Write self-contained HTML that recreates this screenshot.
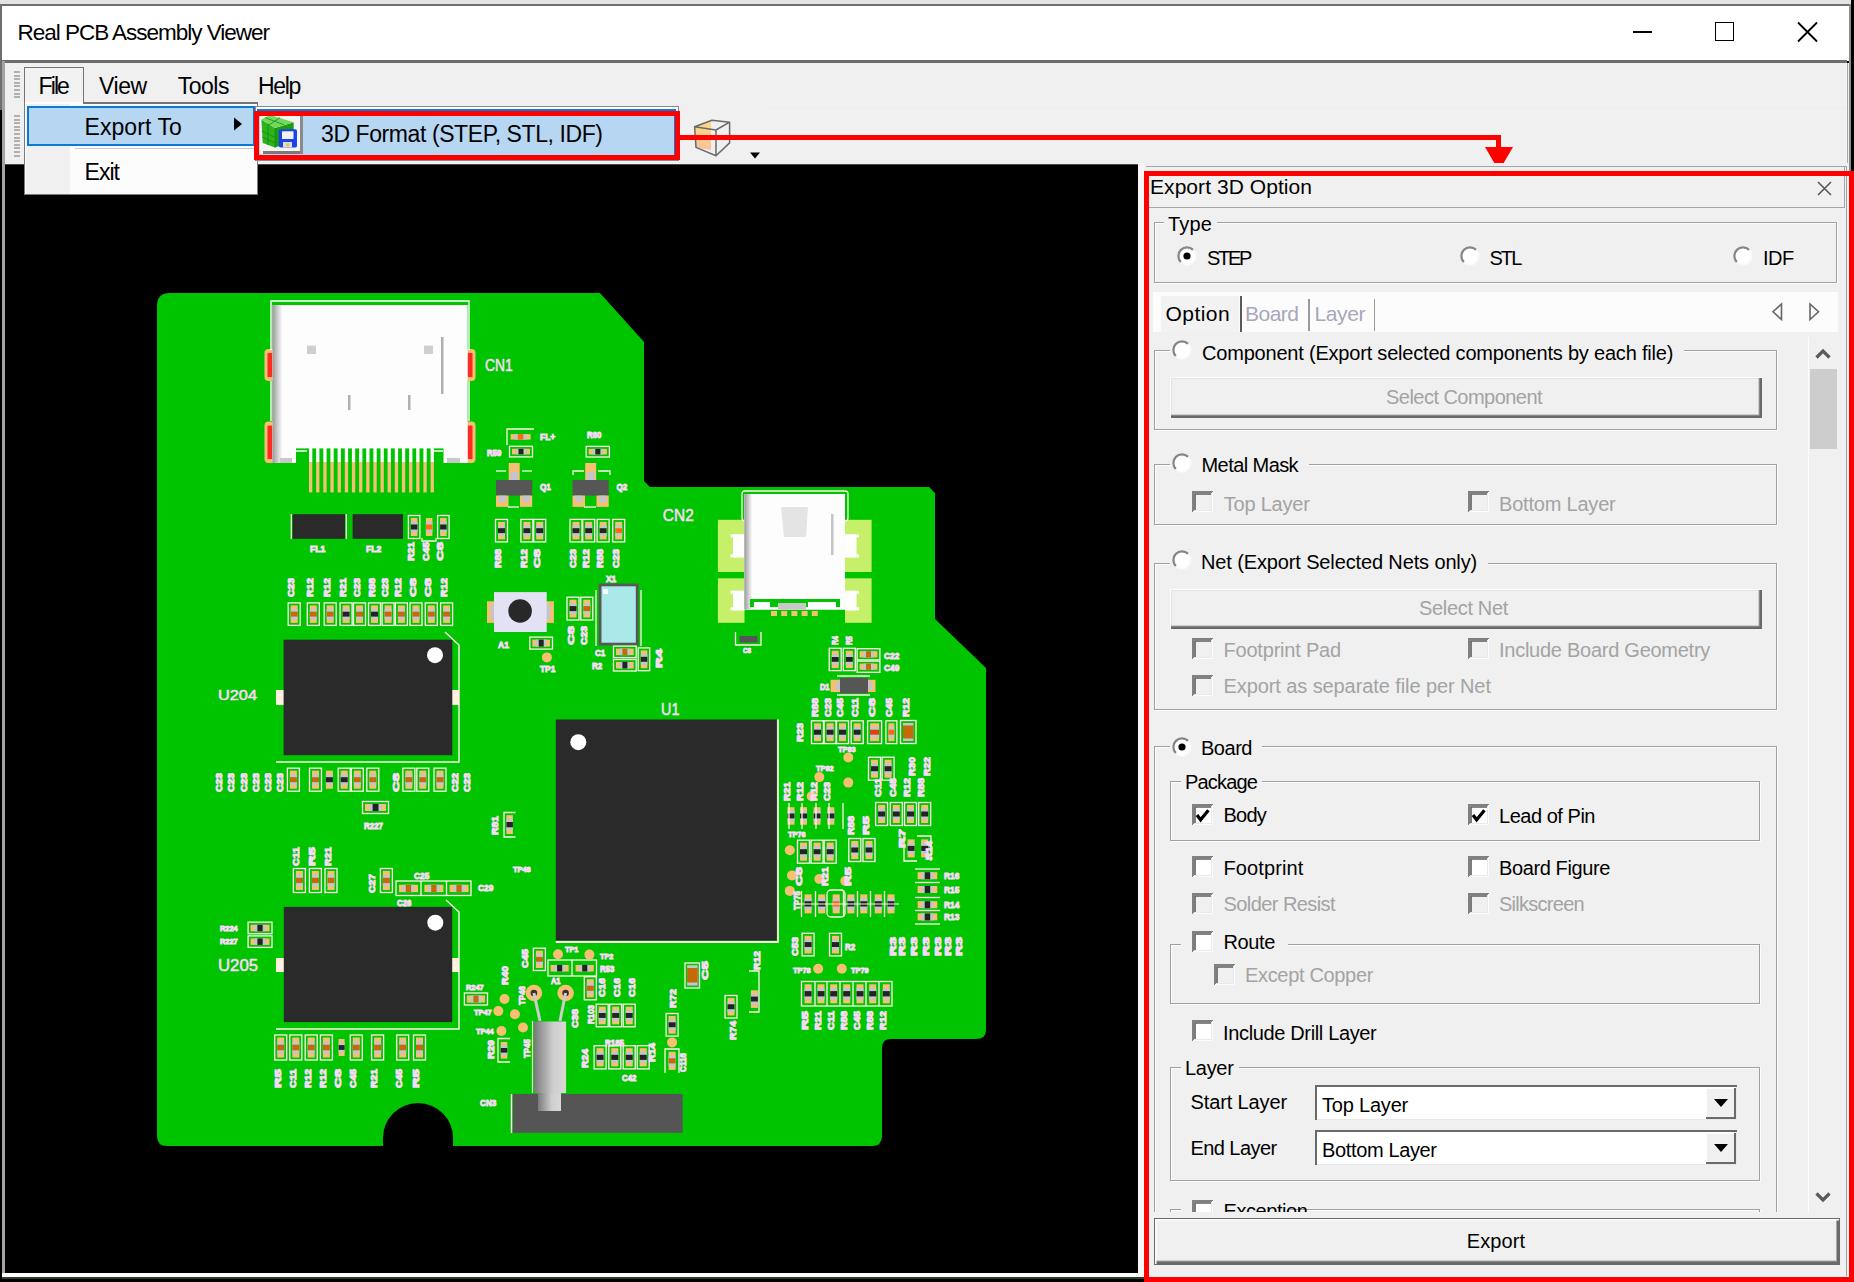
<!DOCTYPE html>
<html><head><meta charset="utf-8"><title>Real PCB Assembly Viewer</title>
<style>
html,body{margin:0;padding:0;}
body{width:1854px;height:1282px;position:relative;overflow:hidden;background:#000;font-family:"Liberation Sans",sans-serif;}
.b{position:absolute;}
.t{position:absolute;white-space:nowrap;line-height:normal;font-family:"Liberation Sans",sans-serif;}
svg.b{overflow:visible;}
</style></head><body>
<div class="b" style="left:0px;top:0px;width:1854px;height:4px;background:#e3e3e3"></div>
<div class="b" style="left:0px;top:4px;width:1851px;height:2px;background:#6f6f6f"></div>
<div class="b" style="left:0px;top:4px;width:2px;height:106px;background:#6f6f6f"></div>
<div class="b" style="left:2px;top:6px;width:1847px;height:55px;background:#fff"></div>
<div class="b" style="left:1849px;top:4px;width:2px;height:1278px;background:#8c8c8c"></div>
<div class="b" style="left:1851px;top:0px;width:3px;height:1282px;background:#000"></div>
<div class="t" style="left:17.5px;top:19.6px;font-size:22.5px;color:#000;letter-spacing:-1.02px;">Real PCB Assembly Viewer</div>
<div class="b" style="left:1633px;top:31px;width:19px;height:2px;background:#000"></div>
<div class="b" style="left:1715px;top:22px;width:19px;height:19px;border:1.8px solid #000;box-sizing:border-box"></div>
<svg class="b" style="left:1795px;top:20px" width="25" height="24"><path d="M3 2.5 L22 21.5 M22 2.5 L3 21.5" stroke="#000" stroke-width="1.8"/></svg>
<div class="b" style="left:2px;top:60px;width:1845px;height:3px;background:#6d6d6d"></div>
<div class="b" style="left:2px;top:61px;width:3px;height:1213px;background:#a3a3a3"></div>
<div class="b" style="left:5px;top:63px;width:1842px;height:101px;background:#f0f0f0"></div>
<div class="b" style="left:766px;top:106.5px;width:1081px;height:1.0px;background:#ececec"></div>
<div class="b" style="left:1846px;top:63px;width:3px;height:1214px;background:#f2f2f2"></div>
<div class="b" style="left:1847px;top:63px;width:1.2999999999999545px;height:1214px;background:#a8a8a8"></div>
<div class="b" style="left:14px;top:71px;width:6px;height:1.5px;background:#b0b0b0"></div>
<div class="b" style="left:14px;top:75px;width:6px;height:1.5px;background:#b0b0b0"></div>
<div class="b" style="left:14px;top:78px;width:6px;height:1.5px;background:#b0b0b0"></div>
<div class="b" style="left:14px;top:82px;width:6px;height:1.5px;background:#b0b0b0"></div>
<div class="b" style="left:14px;top:85px;width:6px;height:1.5px;background:#b0b0b0"></div>
<div class="b" style="left:14px;top:89px;width:6px;height:1.5px;background:#b0b0b0"></div>
<div class="b" style="left:14px;top:93px;width:6px;height:1.5px;background:#b0b0b0"></div>
<div class="b" style="left:14px;top:96px;width:6px;height:1.5px;background:#b0b0b0"></div>
<div class="b" style="left:14px;top:115px;width:6px;height:1.5px;background:#b0b0b0"></div>
<div class="b" style="left:14px;top:119px;width:6px;height:1.5px;background:#b0b0b0"></div>
<div class="b" style="left:14px;top:122px;width:6px;height:1.5px;background:#b0b0b0"></div>
<div class="b" style="left:14px;top:126px;width:6px;height:1.5px;background:#b0b0b0"></div>
<div class="b" style="left:14px;top:129px;width:6px;height:1.5px;background:#b0b0b0"></div>
<div class="b" style="left:14px;top:133px;width:6px;height:1.5px;background:#b0b0b0"></div>
<div class="b" style="left:14px;top:137px;width:6px;height:1.5px;background:#b0b0b0"></div>
<div class="b" style="left:14px;top:140px;width:6px;height:1.5px;background:#b0b0b0"></div>
<div class="b" style="left:14px;top:144px;width:6px;height:1.5px;background:#b0b0b0"></div>
<div class="b" style="left:14px;top:147px;width:6px;height:1.5px;background:#b0b0b0"></div>
<div class="b" style="left:14px;top:151px;width:6px;height:1.5px;background:#b0b0b0"></div>
<div class="b" style="left:14px;top:155px;width:6px;height:1.5px;background:#b0b0b0"></div>
<div class="b" style="left:5px;top:164px;width:1133px;height:1110px;background:#000"></div>
<div class="b" style="left:5px;top:163.5px;width:1133px;height:1.5px;background:#4a4a4a"></div>
<div class="b" style="left:2px;top:1273px;width:1142px;height:4px;background:#fff"></div>
<div class="b" style="left:2px;top:1277px;width:1142px;height:2px;background:#2f3d2a"></div>
<div class="b" style="left:1138px;top:163px;width:6px;height:1114px;background:#f6f6f6"></div>
<div class="b" style="left:24px;top:67px;width:60px;height:37px;border:1.5px solid #747474;border-bottom:none;background:#f2f2f2;box-sizing:border-box"></div>
<div class="t" style="left:38.5px;top:73.2px;font-size:23px;color:#000;letter-spacing:-1.89px;">File</div>
<div class="t" style="left:99.0px;top:73.2px;font-size:23px;color:#000;letter-spacing:-0.43px;">View</div>
<div class="t" style="left:177.7px;top:73.2px;font-size:23px;color:#000;letter-spacing:-0.50px;">Tools</div>
<div class="t" style="left:258.0px;top:73.2px;font-size:23px;color:#000;letter-spacing:-1.33px;">Help</div>
<svg class="b" style="left:690px;top:116px" width="80" height="46">
      <defs><linearGradient id="pe" x1="0" x2="0" y1="0" y2="1"><stop offset="0" stop-color="#fcd983"/><stop offset="1" stop-color="#f8c29a"/></linearGradient></defs>
      <polygon points="4.6,10.7 21,5 21,34 6,31.4" fill="url(#pe)"/>
      <path d="M4.6 10.7 L22 4.2 L39.6 6.2 L39.6 26.9 L26 39.8 L6 31.4 Z M4.6 10.7 L26 14 L39.6 6.2 M26 14 L26 39.8" fill="none" stroke="#6a6a6a" stroke-width="1.5" stroke-linejoin="round"/>
      <polygon points="60,36.6 70,36.6 65,42.4" fill="#000"/>
    </svg>
<div class="b" style="left:24px;top:102px;width:234px;height:93px;border:1.5px solid #7a7a7a;border-top:none;background:#fcfcfc;box-sizing:border-box"></div>
<div class="b" style="left:82.5px;top:102px;width:175.5px;height:2px;background:#747474"></div>
<div class="b" style="left:25.5px;top:104px;width:44.5px;height:89.5px;background:#f0f0f0"></div>
<div class="b" style="left:27px;top:106px;width:228px;height:40px;border:2px solid #0a7ad8;background:#b6d6f2;box-sizing:border-box"></div>
<div class="b" style="left:75px;top:147.5px;width:180px;height:1.5px;background:#c8c8c8"></div>
<div class="t" style="left:84.5px;top:113.6px;font-size:23px;color:#000;letter-spacing:0.08px;">Export To</div>
<svg class="b" style="left:232px;top:116px" width="12" height="16"><polygon points="2,1.5 10,8 2,14.5" fill="#000"/></svg>
<div class="t" style="left:84.5px;top:158.9px;font-size:23px;color:#000;letter-spacing:-0.96px;">Exit</div>
<div class="b" style="left:255px;top:106px;width:424px;height:55px;border:1.5px solid #8a8a8a;background:#fcfcfc;box-sizing:border-box"></div>
<div class="b" style="left:257px;top:109px;width:419px;height:49px;border:2px solid #0a7ad8;background:#b6d6f2;box-sizing:border-box"></div>
<div class="b" style="left:260px;top:115px;width:43px;height:39px;background:#f4f4f4"></div>
<div class="b" style="left:263px;top:151px;width:40px;height:3px;background:#7a7a7a"></div>
<div class="b" style="left:300px;top:115px;width:3px;height:39px;background:#8a8a8a"></div>
<svg class="b" style="left:260px;top:114px" width="44" height="40">
      <polygon points="1.4,5.6 15,14 15,33.4 2.7,28.9" fill="#2db31e"/>
      <polygon points="15,14 33.7,8.2 33.7,27 15,33.4" fill="#1f9a14"/>
      <polygon points="1.4,5.6 9.8,1 33.7,8.2 15,14" fill="#72d85c"/>
      <path d="M8 9.5 L8 31 M1.8 17 L15 23.5 M2.2 23 L15 29 M15 14 L15 33.4 M5 3.6 L24 10.8 M20 3.6 L9 11" stroke="#168a0c" stroke-width="0.8" fill="none"/>
      <rect x="18.8" y="15.3" width="18.2" height="18.1" rx="1.6" fill="#1a44e8"/>
      <rect x="22" y="17.3" width="11.5" height="7.7" fill="#f2f2f2"/>
      <rect x="23" y="28" width="9" height="5.4" fill="#dcdcdc"/>
      <rect x="26.3" y="29.3" width="2.8" height="3" fill="#f0c050"/>
    </svg>
<div class="t" style="left:321.0px;top:120.6px;font-size:23px;color:#000;letter-spacing:-0.41px;">3D Format (STEP, STL, IDF)</div>
<div class="b" style="left:254px;top:110.5px;width:426px;height:49.5px;border:5px solid #ff0000;box-sizing:border-box"></div>
<div class="b" style="left:680px;top:135px;width:821px;height:5px;background:#ff0000"></div>
<div class="b" style="left:1496px;top:135px;width:5px;height:13px;background:#ff0000"></div>
<svg class="b" style="left:1480px;top:145px" width="40" height="30"><polygon points="5,2 33,2 19,26" fill="#ff0000"/></svg>
<svg class="b" style="left:0;top:0" width="1854" height="1282" viewBox="0 0 1854 1282">
<defs><linearGradient id="shL" x1="0" x2="1" y1="0" y2="0"><stop offset="0" stop-color="#9a9a9a"/><stop offset="1" stop-color="#fafafa"/></linearGradient><linearGradient id="cyl" x1="0" x2="1" y1="0" y2="0"><stop offset="0" stop-color="#7a7a7a"/><stop offset="0.6" stop-color="#cfcfcf"/><stop offset="1" stop-color="#d8d8d8"/></linearGradient></defs>
<path d="M170 293 L600 293 L644 342 L644 481 L650 487 L929 487 L935 493 L935 619 L986 668 L986 1030 Q986 1039 976 1039 L891 1039 Q882 1039 882 1048 L882 1136 Q882 1146 872 1146 L453 1146 L453 1138 A35 35 0 0 0 383 1138 L383 1146 L167 1146 Q157 1146 157 1136 L157 306 Q157 293 170 293 Z" fill="#00c400"/>
<rect x="264.5" y="349" width="10" height="32" rx="4" fill="#f7bf72"/>
<rect x="267.5" y="353.0" width="5.0" height="24.0" fill="#ff2a20" />
<rect x="465.5" y="349" width="10" height="32" rx="4" fill="#f7bf72"/>
<rect x="467.5" y="353.0" width="5.0" height="24.0" fill="#ff2a20" />
<rect x="264.5" y="421.6" width="10" height="41.39999999999998" rx="4" fill="#f7bf72"/>
<rect x="267.5" y="425.6" width="5.0" height="33.4" fill="#ff2a20" />
<rect x="465.5" y="421.6" width="10" height="41.39999999999998" rx="4" fill="#f7bf72"/>
<rect x="467.5" y="425.6" width="5.0" height="33.4" fill="#ff2a20" />
<rect x="309.0" y="448.0" width="3.3" height="14.0" fill="#ffffff" />
<rect x="309.0" y="462.0" width="3.3" height="30.4" fill="#f7bf72" />
<rect x="316.1" y="448.0" width="3.3" height="14.0" fill="#ffffff" />
<rect x="316.1" y="462.0" width="3.3" height="30.4" fill="#f7bf72" />
<rect x="323.3" y="448.0" width="3.3" height="14.0" fill="#ffffff" />
<rect x="323.3" y="462.0" width="3.3" height="30.4" fill="#f7bf72" />
<rect x="330.4" y="448.0" width="3.3" height="14.0" fill="#ffffff" />
<rect x="330.4" y="462.0" width="3.3" height="30.4" fill="#f7bf72" />
<rect x="337.6" y="448.0" width="3.3" height="14.0" fill="#ffffff" />
<rect x="337.6" y="462.0" width="3.3" height="30.4" fill="#f7bf72" />
<rect x="344.8" y="448.0" width="3.3" height="14.0" fill="#ffffff" />
<rect x="344.8" y="462.0" width="3.3" height="30.4" fill="#f7bf72" />
<rect x="351.9" y="448.0" width="3.3" height="14.0" fill="#ffffff" />
<rect x="351.9" y="462.0" width="3.3" height="30.4" fill="#f7bf72" />
<rect x="359.1" y="448.0" width="3.3" height="14.0" fill="#ffffff" />
<rect x="359.1" y="462.0" width="3.3" height="30.4" fill="#f7bf72" />
<rect x="366.2" y="448.0" width="3.3" height="14.0" fill="#ffffff" />
<rect x="366.2" y="462.0" width="3.3" height="30.4" fill="#f7bf72" />
<rect x="373.4" y="448.0" width="3.3" height="14.0" fill="#ffffff" />
<rect x="373.4" y="462.0" width="3.3" height="30.4" fill="#f7bf72" />
<rect x="380.5" y="448.0" width="3.3" height="14.0" fill="#ffffff" />
<rect x="380.5" y="462.0" width="3.3" height="30.4" fill="#f7bf72" />
<rect x="387.6" y="448.0" width="3.3" height="14.0" fill="#ffffff" />
<rect x="387.6" y="462.0" width="3.3" height="30.4" fill="#f7bf72" />
<rect x="394.8" y="448.0" width="3.3" height="14.0" fill="#ffffff" />
<rect x="394.8" y="462.0" width="3.3" height="30.4" fill="#f7bf72" />
<rect x="401.9" y="448.0" width="3.3" height="14.0" fill="#ffffff" />
<rect x="401.9" y="462.0" width="3.3" height="30.4" fill="#f7bf72" />
<rect x="409.1" y="448.0" width="3.3" height="14.0" fill="#ffffff" />
<rect x="409.1" y="462.0" width="3.3" height="30.4" fill="#f7bf72" />
<rect x="416.2" y="448.0" width="3.3" height="14.0" fill="#ffffff" />
<rect x="416.2" y="462.0" width="3.3" height="30.4" fill="#f7bf72" />
<rect x="423.4" y="448.0" width="3.3" height="14.0" fill="#ffffff" />
<rect x="423.4" y="462.0" width="3.3" height="30.4" fill="#f7bf72" />
<rect x="430.6" y="448.0" width="3.3" height="14.0" fill="#ffffff" />
<rect x="430.6" y="462.0" width="3.3" height="30.4" fill="#f7bf72" />
<path d="M296.0 451.0 L307.0 451.0" stroke="#ffffff" stroke-width="1.5" fill="none"/>
<path d="M432.0 451.0 L443.0 451.0" stroke="#ffffff" stroke-width="1.5" fill="none"/>
<rect x="272.5" y="305.0" width="195.2" height="143.4" fill="#fdfdfd" />
<rect x="272.5" y="305.0" width="9.5" height="158.0" fill="url(#shL)" />
<rect x="272.5" y="448.0" width="23.5" height="15.0" fill="#fdfdfd" />
<rect x="272.5" y="448.0" width="9.5" height="15.0" fill="url(#shL)" />
<rect x="443.5" y="448.0" width="24.2" height="15.0" fill="#fdfdfd" />
<rect x="280.0" y="458.0" width="12.0" height="5.0" fill="#c8c8c8" />
<rect x="447.0" y="458.0" width="13.0" height="5.0" fill="#c8c8c8" />
<path d="M271.0 350.0 L271.0 301.0 L469.0 301.0 L469.0 350.0" stroke="#ffffff" stroke-width="1.4" fill="none"/>
<path d="M271.0 381.0 L271.0 421.0" stroke="#ffffff" stroke-width="1.4" fill="none"/>
<path d="M469.0 381.0 L469.0 421.0" stroke="#ffffff" stroke-width="1.4" fill="none"/>
<rect x="307.0" y="345.6" width="9.0" height="8.4" fill="#cfcfcf" />
<rect x="424.0" y="345.6" width="9.0" height="8.4" fill="#cfcfcf" />
<rect x="441.0" y="337.0" width="2.5" height="57.0" fill="#b0b0b0" />
<rect x="348.0" y="395.0" width="2.5" height="15.0" fill="#b0b0b0" />
<rect x="408.0" y="395.0" width="2.5" height="15.0" fill="#b0b0b0" />
<text x="485.0" y="370.7" font-size="16.8" fill="#f9daf9" font-family="Liberation Sans" textLength="27.6" lengthAdjust="spacingAndGlyphs" stroke="#f9daf9" stroke-width="0.5">CN1</text>
<rect x="292.6" y="514.2" width="52.4" height="24.6" fill="#2a2a2a" />
<path d="M291.3 514.0 L291.3 539.0" stroke="#fdf3ea" stroke-width="1.2" fill="none"/>
<path d="M346.3 514.0 L346.3 539.0" stroke="#fdf3ea" stroke-width="1.2" fill="none"/>
<rect x="352.6" y="514.2" width="50.3" height="24.6" fill="#2a2a2a" />
<rect x="408.4" y="515.5" width="11.5" height="23.0" fill="none" stroke="#fdf3ea" stroke-width="1.3"/>
<rect x="410.9" y="518.0" width="6.5" height="18.0" fill="#f7bf72" />
<rect x="410.9" y="521.6" width="6.5" height="10.8" fill="#c4c4cc" />
<rect x="410.9" y="524.5" width="6.5" height="5.0" fill="#232323" />
<rect x="425.9" y="518.0" width="6.5" height="18.0" fill="#f7bf72" />
<rect x="425.9" y="521.6" width="6.5" height="10.8" fill="#c4c4cc" />
<rect x="425.9" y="524.5" width="6.5" height="5.0" fill="#ff6a10" />
<rect x="437.6" y="515.5" width="11.5" height="23.0" fill="none" stroke="#fdf3ea" stroke-width="1.3"/>
<rect x="440.1" y="518.0" width="6.5" height="18.0" fill="#f7bf72" />
<rect x="440.1" y="521.6" width="6.5" height="10.8" fill="#c4c4cc" />
<rect x="440.1" y="524.5" width="6.5" height="5.0" fill="#232323" />
<path d="M422.0 538.0 L422.0 541.0 L436.0 541.0 L436.0 538.0" stroke="#fdf3ea" stroke-width="1.3" fill="none"/>
<text x="310.0" y="552.0" font-size="9.0" fill="#f9daf9" font-weight="bold" font-family="Liberation Sans" textLength="15.3" lengthAdjust="spacingAndGlyphs" stroke="#f9daf9" stroke-width="0.9" text-anchor="start">FL1</text>
<text x="366.0" y="552.0" font-size="9.0" fill="#f9daf9" font-weight="bold" font-family="Liberation Sans" textLength="15.3" lengthAdjust="spacingAndGlyphs" stroke="#f9daf9" stroke-width="0.9" text-anchor="start">FL2</text>
<text transform="translate(414.0,561.0) rotate(-90)" font-size="9.6" fill="#f9daf9" font-weight="bold" font-family="Liberation Sans" textLength="19.0" lengthAdjust="spacingAndGlyphs" stroke="#f9daf9" stroke-width="0.9">R21</text>
<text transform="translate(429.0,561.0) rotate(-90)" font-size="9.6" fill="#f9daf9" font-weight="bold" font-family="Liberation Sans" textLength="19.0" lengthAdjust="spacingAndGlyphs" stroke="#f9daf9" stroke-width="0.9">C45</text>
<text transform="translate(443.0,561.0) rotate(-90)" font-size="9.6" fill="#f9daf9" font-weight="bold" font-family="Liberation Sans" textLength="19.0" lengthAdjust="spacingAndGlyphs" stroke="#f9daf9" stroke-width="0.9">C8</text>
<rect x="288.2" y="602.9" width="12.0" height="22.5" fill="none" stroke="#fdf3ea" stroke-width="1.3"/>
<rect x="290.7" y="605.4" width="7.0" height="17.5" fill="#f7bf72" />
<rect x="290.7" y="608.9" width="7.0" height="10.5" fill="#c4c4cc" />
<rect x="290.7" y="611.7" width="7.0" height="4.9" fill="#c46a08" />
<rect x="307.3" y="602.9" width="12.0" height="22.5" fill="none" stroke="#fdf3ea" stroke-width="1.3"/>
<rect x="309.8" y="605.4" width="7.0" height="17.5" fill="#f7bf72" />
<rect x="309.8" y="608.9" width="7.0" height="10.5" fill="#c4c4cc" />
<rect x="309.8" y="611.7" width="7.0" height="4.9" fill="#c46a08" />
<rect x="324.2" y="602.9" width="12.0" height="22.5" fill="none" stroke="#fdf3ea" stroke-width="1.3"/>
<rect x="326.7" y="605.4" width="7.0" height="17.5" fill="#f7bf72" />
<rect x="326.7" y="608.9" width="7.0" height="10.5" fill="#c4c4cc" />
<rect x="326.7" y="611.7" width="7.0" height="4.9" fill="#c46a08" />
<rect x="340.1" y="602.9" width="12.0" height="22.5" fill="none" stroke="#fdf3ea" stroke-width="1.3"/>
<rect x="342.6" y="605.4" width="7.0" height="17.5" fill="#f7bf72" />
<rect x="342.6" y="608.9" width="7.0" height="10.5" fill="#c4c4cc" />
<rect x="342.6" y="611.7" width="7.0" height="4.9" fill="#232323" />
<rect x="353.5" y="602.9" width="12.0" height="22.5" fill="none" stroke="#fdf3ea" stroke-width="1.3"/>
<rect x="356.0" y="605.4" width="7.0" height="17.5" fill="#f7bf72" />
<rect x="356.0" y="608.9" width="7.0" height="10.5" fill="#c4c4cc" />
<rect x="356.0" y="611.7" width="7.0" height="4.9" fill="#c46a08" />
<rect x="368.5" y="602.9" width="12.0" height="22.5" fill="none" stroke="#fdf3ea" stroke-width="1.3"/>
<rect x="371.0" y="605.4" width="7.0" height="17.5" fill="#f7bf72" />
<rect x="371.0" y="608.9" width="7.0" height="10.5" fill="#c4c4cc" />
<rect x="371.0" y="611.7" width="7.0" height="4.9" fill="#232323" />
<rect x="382.1" y="602.9" width="12.0" height="22.5" fill="none" stroke="#fdf3ea" stroke-width="1.3"/>
<rect x="384.6" y="605.4" width="7.0" height="17.5" fill="#f7bf72" />
<rect x="384.6" y="608.9" width="7.0" height="10.5" fill="#c4c4cc" />
<rect x="384.6" y="611.7" width="7.0" height="4.9" fill="#c46a08" />
<rect x="395.4" y="602.9" width="12.0" height="22.5" fill="none" stroke="#fdf3ea" stroke-width="1.3"/>
<rect x="397.9" y="605.4" width="7.0" height="17.5" fill="#f7bf72" />
<rect x="397.9" y="608.9" width="7.0" height="10.5" fill="#c4c4cc" />
<rect x="397.9" y="611.7" width="7.0" height="4.9" fill="#c46a08" />
<rect x="410.0" y="602.9" width="12.0" height="22.5" fill="none" stroke="#fdf3ea" stroke-width="1.3"/>
<rect x="412.5" y="605.4" width="7.0" height="17.5" fill="#f7bf72" />
<rect x="412.5" y="608.9" width="7.0" height="10.5" fill="#c4c4cc" />
<rect x="412.5" y="611.7" width="7.0" height="4.9" fill="#c46a08" />
<rect x="425.3" y="602.9" width="12.0" height="22.5" fill="none" stroke="#fdf3ea" stroke-width="1.3"/>
<rect x="427.8" y="605.4" width="7.0" height="17.5" fill="#f7bf72" />
<rect x="427.8" y="608.9" width="7.0" height="10.5" fill="#c4c4cc" />
<rect x="427.8" y="611.7" width="7.0" height="4.9" fill="#c46a08" />
<rect x="440.6" y="602.9" width="12.0" height="22.5" fill="none" stroke="#fdf3ea" stroke-width="1.3"/>
<rect x="443.1" y="605.4" width="7.0" height="17.5" fill="#f7bf72" />
<rect x="443.1" y="608.9" width="7.0" height="10.5" fill="#c4c4cc" />
<rect x="443.1" y="611.7" width="7.0" height="4.9" fill="#c46a08" />
<text transform="translate(294.2,597.0) rotate(-90)" font-size="9.6" fill="#f9daf9" font-weight="bold" font-family="Liberation Sans" textLength="19.0" lengthAdjust="spacingAndGlyphs" stroke="#f9daf9" stroke-width="0.9">C23</text>
<text transform="translate(313.3,597.0) rotate(-90)" font-size="9.6" fill="#f9daf9" font-weight="bold" font-family="Liberation Sans" textLength="19.0" lengthAdjust="spacingAndGlyphs" stroke="#f9daf9" stroke-width="0.9">R12</text>
<text transform="translate(330.2,597.0) rotate(-90)" font-size="9.6" fill="#f9daf9" font-weight="bold" font-family="Liberation Sans" textLength="19.0" lengthAdjust="spacingAndGlyphs" stroke="#f9daf9" stroke-width="0.9">R12</text>
<text transform="translate(346.1,597.0) rotate(-90)" font-size="9.6" fill="#f9daf9" font-weight="bold" font-family="Liberation Sans" textLength="19.0" lengthAdjust="spacingAndGlyphs" stroke="#f9daf9" stroke-width="0.9">R21</text>
<text transform="translate(359.5,597.0) rotate(-90)" font-size="9.6" fill="#f9daf9" font-weight="bold" font-family="Liberation Sans" textLength="19.0" lengthAdjust="spacingAndGlyphs" stroke="#f9daf9" stroke-width="0.9">C23</text>
<text transform="translate(374.5,597.0) rotate(-90)" font-size="9.6" fill="#f9daf9" font-weight="bold" font-family="Liberation Sans" textLength="19.0" lengthAdjust="spacingAndGlyphs" stroke="#f9daf9" stroke-width="0.9">R88</text>
<text transform="translate(388.1,597.0) rotate(-90)" font-size="9.6" fill="#f9daf9" font-weight="bold" font-family="Liberation Sans" textLength="19.0" lengthAdjust="spacingAndGlyphs" stroke="#f9daf9" stroke-width="0.9">C23</text>
<text transform="translate(401.4,597.0) rotate(-90)" font-size="9.6" fill="#f9daf9" font-weight="bold" font-family="Liberation Sans" textLength="19.0" lengthAdjust="spacingAndGlyphs" stroke="#f9daf9" stroke-width="0.9">R12</text>
<text transform="translate(416.0,597.0) rotate(-90)" font-size="9.6" fill="#f9daf9" font-weight="bold" font-family="Liberation Sans" textLength="19.0" lengthAdjust="spacingAndGlyphs" stroke="#f9daf9" stroke-width="0.9">C8</text>
<text transform="translate(431.3,597.0) rotate(-90)" font-size="9.6" fill="#f9daf9" font-weight="bold" font-family="Liberation Sans" textLength="19.0" lengthAdjust="spacingAndGlyphs" stroke="#f9daf9" stroke-width="0.9">C8</text>
<text transform="translate(446.6,597.0) rotate(-90)" font-size="9.6" fill="#f9daf9" font-weight="bold" font-family="Liberation Sans" textLength="19.0" lengthAdjust="spacingAndGlyphs" stroke="#f9daf9" stroke-width="0.9">R12</text>
<rect x="276.0" y="690.0" width="8.0" height="15.0" fill="#fff0e0" />
<rect x="452.0" y="690.0" width="7.0" height="15.0" fill="#fff0e0" />
<rect x="283.6" y="639.7" width="168.7" height="115.5" fill="#2a2a2a" />
<circle cx="435" cy="655.2" r="8" fill="#fff"/>
<path d="M445.0 632.0 L459.0 645.0 L459.0 762.0 L276.0 762.0" stroke="#fdf3ea" stroke-width="1.4" fill="none"/>
<text x="218.0" y="699.5" font-size="14" fill="#f9daf9" font-family="Liberation Sans" textLength="39" lengthAdjust="spacingAndGlyphs" stroke="#f9daf9" stroke-width="0.5">U204</text>
<rect x="287.4" y="768.2" width="12.0" height="23.0" fill="none" stroke="#fdf3ea" stroke-width="1.3"/>
<rect x="289.9" y="770.7" width="7.0" height="18.0" fill="#f7bf72" />
<rect x="289.9" y="774.3" width="7.0" height="10.8" fill="#c4c4cc" />
<rect x="289.9" y="777.2" width="7.0" height="5.0" fill="#c46a08" />
<rect x="309.5" y="768.2" width="12.0" height="23.0" fill="none" stroke="#fdf3ea" stroke-width="1.3"/>
<rect x="312.0" y="770.7" width="7.0" height="18.0" fill="#f7bf72" />
<rect x="312.0" y="774.3" width="7.0" height="10.8" fill="#c4c4cc" />
<rect x="312.0" y="777.2" width="7.0" height="5.0" fill="#c46a08" />
<rect x="338.2" y="768.2" width="12.0" height="23.0" fill="none" stroke="#fdf3ea" stroke-width="1.3"/>
<rect x="340.7" y="770.7" width="7.0" height="18.0" fill="#f7bf72" />
<rect x="340.7" y="774.3" width="7.0" height="10.8" fill="#c4c4cc" />
<rect x="340.7" y="777.2" width="7.0" height="5.0" fill="#232323" />
<rect x="351.3" y="768.2" width="12.0" height="23.0" fill="none" stroke="#fdf3ea" stroke-width="1.3"/>
<rect x="353.8" y="770.7" width="7.0" height="18.0" fill="#f7bf72" />
<rect x="353.8" y="774.3" width="7.0" height="10.8" fill="#c4c4cc" />
<rect x="353.8" y="777.2" width="7.0" height="5.0" fill="#c46a08" />
<rect x="366.8" y="768.2" width="12.0" height="23.0" fill="none" stroke="#fdf3ea" stroke-width="1.3"/>
<rect x="369.3" y="770.7" width="7.0" height="18.0" fill="#f7bf72" />
<rect x="369.3" y="774.3" width="7.0" height="10.8" fill="#c4c4cc" />
<rect x="369.3" y="777.2" width="7.0" height="5.0" fill="#c46a08" />
<rect x="402.9" y="768.2" width="12.0" height="23.0" fill="none" stroke="#fdf3ea" stroke-width="1.3"/>
<rect x="405.4" y="770.7" width="7.0" height="18.0" fill="#f7bf72" />
<rect x="405.4" y="774.3" width="7.0" height="10.8" fill="#c4c4cc" />
<rect x="405.4" y="777.2" width="7.0" height="5.0" fill="#c46a08" />
<rect x="416.8" y="768.2" width="12.0" height="23.0" fill="none" stroke="#fdf3ea" stroke-width="1.3"/>
<rect x="419.3" y="770.7" width="7.0" height="18.0" fill="#f7bf72" />
<rect x="419.3" y="774.3" width="7.0" height="10.8" fill="#c4c4cc" />
<rect x="419.3" y="777.2" width="7.0" height="5.0" fill="#c46a08" />
<rect x="434.0" y="768.2" width="12.0" height="23.0" fill="none" stroke="#fdf3ea" stroke-width="1.3"/>
<rect x="436.5" y="770.7" width="7.0" height="18.0" fill="#f7bf72" />
<rect x="436.5" y="774.3" width="7.0" height="10.8" fill="#c4c4cc" />
<rect x="436.5" y="777.2" width="7.0" height="5.0" fill="#c46a08" />
<rect x="325.9" y="770.7" width="7.0" height="18.0" fill="#f7bf72" />
<rect x="325.9" y="774.3" width="7.0" height="10.8" fill="#c4c4cc" />
<rect x="325.9" y="777.2" width="7.0" height="5.0" fill="#232323" />
<text transform="translate(222.0,792.0) rotate(-90)" font-size="9.6" fill="#f9daf9" font-weight="bold" font-family="Liberation Sans" textLength="19.0" lengthAdjust="spacingAndGlyphs" stroke="#f9daf9" stroke-width="0.9">C23</text>
<text transform="translate(234.0,792.0) rotate(-90)" font-size="9.6" fill="#f9daf9" font-weight="bold" font-family="Liberation Sans" textLength="19.0" lengthAdjust="spacingAndGlyphs" stroke="#f9daf9" stroke-width="0.9">C23</text>
<text transform="translate(247.0,792.0) rotate(-90)" font-size="9.6" fill="#f9daf9" font-weight="bold" font-family="Liberation Sans" textLength="19.0" lengthAdjust="spacingAndGlyphs" stroke="#f9daf9" stroke-width="0.9">C23</text>
<text transform="translate(259.0,792.0) rotate(-90)" font-size="9.6" fill="#f9daf9" font-weight="bold" font-family="Liberation Sans" textLength="19.0" lengthAdjust="spacingAndGlyphs" stroke="#f9daf9" stroke-width="0.9">C23</text>
<text transform="translate(271.0,792.0) rotate(-90)" font-size="9.6" fill="#f9daf9" font-weight="bold" font-family="Liberation Sans" textLength="19.0" lengthAdjust="spacingAndGlyphs" stroke="#f9daf9" stroke-width="0.9">C23</text>
<text transform="translate(283.0,792.0) rotate(-90)" font-size="9.6" fill="#f9daf9" font-weight="bold" font-family="Liberation Sans" textLength="19.0" lengthAdjust="spacingAndGlyphs" stroke="#f9daf9" stroke-width="0.9">C23</text>
<text transform="translate(399.0,792.0) rotate(-90)" font-size="9.6" fill="#f9daf9" font-weight="bold" font-family="Liberation Sans" textLength="19.0" lengthAdjust="spacingAndGlyphs" stroke="#f9daf9" stroke-width="0.9">C8</text>
<text transform="translate(458.0,792.0) rotate(-90)" font-size="9.6" fill="#f9daf9" font-weight="bold" font-family="Liberation Sans" textLength="19.0" lengthAdjust="spacingAndGlyphs" stroke="#f9daf9" stroke-width="0.9">C22</text>
<text transform="translate(470.0,792.0) rotate(-90)" font-size="9.6" fill="#f9daf9" font-weight="bold" font-family="Liberation Sans" textLength="19.0" lengthAdjust="spacingAndGlyphs" stroke="#f9daf9" stroke-width="0.9">C23</text>
<rect x="362.5" y="801.5" width="26.0" height="12.0" fill="none" stroke="#fdf3ea" stroke-width="1.3"/>
<rect x="365.0" y="804.0" width="21.0" height="7.0" fill="#f7bf72" />
<rect x="369.2" y="804.0" width="12.6" height="7.0" fill="#c4c4cc" />
<rect x="372.6" y="804.0" width="5.9" height="7.0" fill="#232323" />
<text x="364.0" y="829.0" font-size="8.4" fill="#f9daf9" font-weight="bold" font-family="Liberation Sans" textLength="19.0" lengthAdjust="spacingAndGlyphs" stroke="#f9daf9" stroke-width="0.9" text-anchor="start">R227</text>
<rect x="510.6" y="434.1" width="20.0" height="5.5" fill="#f7bf72" />
<rect x="514.6" y="434.1" width="12.0" height="5.5" fill="#c4c4cc" />
<rect x="517.8" y="434.1" width="5.6" height="5.5" fill="#ff6a10" />
<path d="M534.0 429.0 L507.0 429.0 L507.0 445.0" stroke="#fdf3ea" stroke-width="1.3" fill="none"/>
<rect x="509.5" y="446.3" width="23.0" height="10.6" fill="none" stroke="#fdf3ea" stroke-width="1.3"/>
<rect x="512.0" y="448.8" width="18.0" height="5.6" fill="#f7bf72" />
<rect x="515.6" y="448.8" width="10.8" height="5.6" fill="#c4c4cc" />
<rect x="518.5" y="448.8" width="5.0" height="5.6" fill="#232323" />
<text x="487.0" y="456.0" font-size="8.4" fill="#f9daf9" font-weight="bold" font-family="Liberation Sans" textLength="14.3" lengthAdjust="spacingAndGlyphs" stroke="#f9daf9" stroke-width="0.9" text-anchor="start">R59</text>
<rect x="586.2" y="446.4" width="23.2" height="10.6" fill="none" stroke="#fdf3ea" stroke-width="1.3"/>
<rect x="588.7" y="448.9" width="18.2" height="5.6" fill="#f7bf72" />
<rect x="592.3" y="448.9" width="10.9" height="5.6" fill="#c4c4cc" />
<rect x="595.3" y="448.9" width="5.1" height="5.6" fill="#232323" />
<text x="587.0" y="438.0" font-size="8.4" fill="#f9daf9" font-weight="bold" font-family="Liberation Sans" textLength="14.3" lengthAdjust="spacingAndGlyphs" stroke="#f9daf9" stroke-width="0.9" text-anchor="start">R60</text>
<text x="540.0" y="440.0" font-size="9.0" fill="#f9daf9" font-weight="bold" font-family="Liberation Sans" textLength="15.3" lengthAdjust="spacingAndGlyphs" stroke="#f9daf9" stroke-width="0.9" text-anchor="start">FL+</text>
<rect x="508.7" y="463.0" width="11.0" height="17.0" fill="#f7bf72" />
<rect x="510.5" y="472.0" width="7.5" height="8.0" fill="#c4c4cc" />
<rect x="496.0" y="480.0" width="36.2" height="15.6" fill="#565656" />
<rect x="496.0" y="495.6" width="12.5" height="11.3" fill="#f7bf72" />
<rect x="520.0" y="495.6" width="12.2" height="11.3" fill="#f7bf72" />
<rect x="498.5" y="495.6" width="7.5" height="6.4" fill="#c4c4cc" />
<rect x="522.5" y="495.6" width="7.5" height="6.4" fill="#c4c4cc" />
<text x="540.0" y="490.0" font-size="9.6" fill="#f9daf9" font-weight="bold" font-family="Liberation Sans" textLength="10.9" lengthAdjust="spacingAndGlyphs" stroke="#f9daf9" stroke-width="0.9" text-anchor="start">Q1</text>
<rect x="585.2" y="463.0" width="11.0" height="17.0" fill="#f7bf72" />
<rect x="587.0" y="472.0" width="7.5" height="8.0" fill="#c4c4cc" />
<rect x="572.5" y="480.0" width="36.2" height="15.6" fill="#565656" />
<rect x="572.5" y="495.6" width="12.5" height="11.3" fill="#f7bf72" />
<rect x="596.5" y="495.6" width="12.2" height="11.3" fill="#f7bf72" />
<rect x="575.0" y="495.6" width="7.5" height="6.4" fill="#c4c4cc" />
<rect x="599.0" y="495.6" width="7.5" height="6.4" fill="#c4c4cc" />
<text x="616.5" y="490.0" font-size="9.6" fill="#f9daf9" font-weight="bold" font-family="Liberation Sans" textLength="10.9" lengthAdjust="spacingAndGlyphs" stroke="#f9daf9" stroke-width="0.9" text-anchor="start">Q2</text>
<path d="M496.0 471.0 L506.0 471.0" stroke="#fdf3ea" stroke-width="1.3" fill="none"/>
<path d="M522.0 471.0 L532.0 471.0" stroke="#fdf3ea" stroke-width="1.3" fill="none"/>
<path d="M573.0 475.0 L573.0 471.0 L584.0 471.0" stroke="#fdf3ea" stroke-width="1.3" fill="none"/>
<path d="M598.0 471.0 L610.0 471.0 L610.0 475.0" stroke="#fdf3ea" stroke-width="1.3" fill="none"/>
<path d="M508.0 507.0 L519.0 507.0" stroke="#fdf3ea" stroke-width="1.3" fill="none"/>
<path d="M584.0 507.0 L596.0 507.0" stroke="#fdf3ea" stroke-width="1.3" fill="none"/>
<rect x="495.5" y="519.4" width="12.0" height="22.5" fill="none" stroke="#fdf3ea" stroke-width="1.3"/>
<rect x="498.0" y="521.9" width="7.0" height="17.5" fill="#f7bf72" />
<rect x="498.0" y="525.4" width="7.0" height="10.5" fill="#c4c4cc" />
<rect x="498.0" y="528.2" width="7.0" height="4.9" fill="#232323" />
<rect x="520.9" y="519.4" width="12.0" height="22.5" fill="none" stroke="#fdf3ea" stroke-width="1.3"/>
<rect x="523.4" y="521.9" width="7.0" height="17.5" fill="#f7bf72" />
<rect x="523.4" y="525.4" width="7.0" height="10.5" fill="#c4c4cc" />
<rect x="523.4" y="528.2" width="7.0" height="4.9" fill="#232323" />
<rect x="533.7" y="519.4" width="12.0" height="22.5" fill="none" stroke="#fdf3ea" stroke-width="1.3"/>
<rect x="536.2" y="521.9" width="7.0" height="17.5" fill="#f7bf72" />
<rect x="536.2" y="525.4" width="7.0" height="10.5" fill="#c4c4cc" />
<rect x="536.2" y="528.2" width="7.0" height="4.9" fill="#232323" />
<rect x="570.0" y="519.4" width="12.0" height="22.5" fill="none" stroke="#fdf3ea" stroke-width="1.3"/>
<rect x="572.5" y="521.9" width="7.0" height="17.5" fill="#f7bf72" />
<rect x="572.5" y="525.4" width="7.0" height="10.5" fill="#c4c4cc" />
<rect x="572.5" y="528.2" width="7.0" height="4.9" fill="#232323" />
<rect x="582.7" y="519.4" width="12.0" height="22.5" fill="none" stroke="#fdf3ea" stroke-width="1.3"/>
<rect x="585.2" y="521.9" width="7.0" height="17.5" fill="#f7bf72" />
<rect x="585.2" y="525.4" width="7.0" height="10.5" fill="#c4c4cc" />
<rect x="585.2" y="528.2" width="7.0" height="4.9" fill="#232323" />
<rect x="597.1" y="519.4" width="12.0" height="22.5" fill="none" stroke="#fdf3ea" stroke-width="1.3"/>
<rect x="599.6" y="521.9" width="7.0" height="17.5" fill="#f7bf72" />
<rect x="599.6" y="525.4" width="7.0" height="10.5" fill="#c4c4cc" />
<rect x="599.6" y="528.2" width="7.0" height="4.9" fill="#232323" />
<rect x="612.7" y="519.4" width="12.0" height="22.5" fill="none" stroke="#fdf3ea" stroke-width="1.3"/>
<rect x="615.2" y="521.9" width="7.0" height="17.5" fill="#f7bf72" />
<rect x="615.2" y="525.4" width="7.0" height="10.5" fill="#c4c4cc" />
<rect x="615.2" y="528.2" width="7.0" height="4.9" fill="#ff6a10" />
<text transform="translate(501.0,568.0) rotate(-90)" font-size="9.6" fill="#f9daf9" font-weight="bold" font-family="Liberation Sans" textLength="19.0" lengthAdjust="spacingAndGlyphs" stroke="#f9daf9" stroke-width="0.9">R88</text>
<text transform="translate(527.0,568.0) rotate(-90)" font-size="9.6" fill="#f9daf9" font-weight="bold" font-family="Liberation Sans" textLength="19.0" lengthAdjust="spacingAndGlyphs" stroke="#f9daf9" stroke-width="0.9">R12</text>
<text transform="translate(540.0,568.0) rotate(-90)" font-size="9.6" fill="#f9daf9" font-weight="bold" font-family="Liberation Sans" textLength="19.0" lengthAdjust="spacingAndGlyphs" stroke="#f9daf9" stroke-width="0.9">C8</text>
<text transform="translate(576.0,568.0) rotate(-90)" font-size="9.6" fill="#f9daf9" font-weight="bold" font-family="Liberation Sans" textLength="19.0" lengthAdjust="spacingAndGlyphs" stroke="#f9daf9" stroke-width="0.9">C23</text>
<text transform="translate(589.0,568.0) rotate(-90)" font-size="9.6" fill="#f9daf9" font-weight="bold" font-family="Liberation Sans" textLength="19.0" lengthAdjust="spacingAndGlyphs" stroke="#f9daf9" stroke-width="0.9">R12</text>
<text transform="translate(603.0,568.0) rotate(-90)" font-size="9.6" fill="#f9daf9" font-weight="bold" font-family="Liberation Sans" textLength="19.0" lengthAdjust="spacingAndGlyphs" stroke="#f9daf9" stroke-width="0.9">R88</text>
<text transform="translate(619.0,568.0) rotate(-90)" font-size="9.6" fill="#f9daf9" font-weight="bold" font-family="Liberation Sans" textLength="19.0" lengthAdjust="spacingAndGlyphs" stroke="#f9daf9" stroke-width="0.9">C23</text>
<rect x="487.0" y="601.3" width="7.5" height="21.6" fill="#f7bf72" />
<rect x="546.2" y="601.3" width="7.7" height="21.6" fill="#f7bf72" />
<rect x="491.0" y="604.0" width="3.5" height="16.0" fill="#c4c4cc" />
<rect x="546.2" y="604.0" width="3.8" height="16.0" fill="#c4c4cc" />
<rect x="494.0" y="592.1" width="52.7" height="39.9" fill="#e2e2f4" />
<circle cx="520.1" cy="611" r="11.8" fill="#282828"/>
<rect x="529.8" y="637.1" width="22.7" height="12.0" fill="none" stroke="#fdf3ea" stroke-width="1.3"/>
<rect x="532.3" y="639.6" width="17.7" height="7.0" fill="#f7bf72" />
<rect x="535.8" y="639.6" width="10.6" height="7.0" fill="#c4c4cc" />
<rect x="538.7" y="639.6" width="5.0" height="7.0" fill="#232323" />
<text x="498.0" y="648.0" font-size="9.6" fill="#f9daf9" font-weight="bold" font-family="Liberation Sans" textLength="10.9" lengthAdjust="spacingAndGlyphs" stroke="#f9daf9" stroke-width="0.9" text-anchor="start">A1</text>
<circle cx="546.9" cy="657.4" r="5" fill="#f7bf72"/>
<text x="540.0" y="672.0" font-size="9.0" fill="#f9daf9" font-weight="bold" font-family="Liberation Sans" textLength="15.3" lengthAdjust="spacingAndGlyphs" stroke="#f9daf9" stroke-width="0.9" text-anchor="start">TP1</text>
<rect x="567.0" y="597.2" width="12.0" height="22.8" fill="none" stroke="#fdf3ea" stroke-width="1.3"/>
<rect x="569.5" y="599.7" width="7.0" height="17.8" fill="#f7bf72" />
<rect x="569.5" y="603.3" width="7.0" height="10.7" fill="#c4c4cc" />
<rect x="569.5" y="606.1" width="7.0" height="5.0" fill="#232323" />
<rect x="580.8" y="597.2" width="12.0" height="22.8" fill="none" stroke="#fdf3ea" stroke-width="1.3"/>
<rect x="583.3" y="599.7" width="7.0" height="17.8" fill="#f7bf72" />
<rect x="583.3" y="603.3" width="7.0" height="10.7" fill="#c4c4cc" />
<rect x="583.3" y="606.1" width="7.0" height="5.0" fill="#c46a08" />
<text transform="translate(574.0,645.0) rotate(-90)" font-size="9.6" fill="#f9daf9" font-weight="bold" font-family="Liberation Sans" textLength="19.0" lengthAdjust="spacingAndGlyphs" stroke="#f9daf9" stroke-width="0.9">C8</text>
<text transform="translate(587.0,645.0) rotate(-90)" font-size="9.6" fill="#f9daf9" font-weight="bold" font-family="Liberation Sans" textLength="19.0" lengthAdjust="spacingAndGlyphs" stroke="#f9daf9" stroke-width="0.9">C23</text>
<rect x="598.7" y="583.5" width="39.9" height="62.0" fill="#585858" />
<rect x="601.5" y="586.3" width="34.3" height="56.4" fill="#a9e9ea" />
<rect x="603.0" y="589.0" width="5.0" height="5.0" fill="#f4ffff" />
<path d="M596.0 590.0 L596.0 646.0" stroke="#fdf3ea" stroke-width="1.3" fill="none"/>
<path d="M641.0 590.0 L641.0 646.0" stroke="#fdf3ea" stroke-width="1.3" fill="none"/>
<text x="606.0" y="582.0" font-size="9.0" fill="#f9daf9" font-weight="bold" font-family="Liberation Sans" textLength="10.2" lengthAdjust="spacingAndGlyphs" stroke="#f9daf9" stroke-width="0.9" text-anchor="start">X1</text>
<rect x="613.5" y="646.1" width="22.7" height="11.5" fill="none" stroke="#fdf3ea" stroke-width="1.3"/>
<rect x="616.0" y="648.6" width="17.7" height="6.5" fill="#f7bf72" />
<rect x="619.5" y="648.6" width="10.6" height="6.5" fill="#c4c4cc" />
<rect x="622.4" y="648.6" width="5.0" height="6.5" fill="#c46a08" />
<rect x="613.5" y="659.5" width="22.7" height="11.5" fill="none" stroke="#fdf3ea" stroke-width="1.3"/>
<rect x="616.0" y="662.0" width="17.7" height="6.5" fill="#f7bf72" />
<rect x="619.5" y="662.0" width="10.6" height="6.5" fill="#c4c4cc" />
<rect x="622.4" y="662.0" width="5.0" height="6.5" fill="#232323" />
<rect x="638.2" y="647.9" width="11.5" height="22.8" fill="none" stroke="#fdf3ea" stroke-width="1.3"/>
<rect x="640.8" y="650.4" width="6.5" height="17.8" fill="#f7bf72" />
<rect x="640.8" y="654.0" width="6.5" height="10.7" fill="#c4c4cc" />
<rect x="640.8" y="656.8" width="6.5" height="5.0" fill="#232323" />
<text x="595.0" y="656.0" font-size="9.0" fill="#f9daf9" font-weight="bold" font-family="Liberation Sans" textLength="10.2" lengthAdjust="spacingAndGlyphs" stroke="#f9daf9" stroke-width="0.9" text-anchor="start">C1</text>
<text x="592.0" y="669.0" font-size="9.0" fill="#f9daf9" font-weight="bold" font-family="Liberation Sans" textLength="10.2" lengthAdjust="spacingAndGlyphs" stroke="#f9daf9" stroke-width="0.9" text-anchor="start">R2</text>
<text transform="translate(662.0,668.0) rotate(-90)" font-size="9.6" fill="#f9daf9" font-weight="bold" font-family="Liberation Sans" textLength="19.0" lengthAdjust="spacingAndGlyphs" stroke="#f9daf9" stroke-width="0.9">R4</text>
<rect x="717.9" y="519.8" width="26.6" height="52.2" fill="#c6f06a" />
<rect x="845.0" y="519.8" width="26.6" height="52.2" fill="#c6f06a" />
<rect x="733.0" y="534.4" width="11.5" height="23.0" fill="#ffffff" />
<rect x="730.5" y="534.4" width="14.0" height="3.0" fill="#ffffff" />
<rect x="730.5" y="554.4" width="14.0" height="3.0" fill="#ffffff" />
<rect x="845.0" y="534.4" width="11.5" height="23.0" fill="#ffffff" />
<rect x="845.0" y="534.4" width="14.0" height="3.0" fill="#ffffff" />
<rect x="845.0" y="554.4" width="14.0" height="3.0" fill="#ffffff" />
<rect x="717.9" y="578.3" width="26.6" height="44.5" fill="#c6f06a" />
<rect x="845.0" y="578.3" width="26.6" height="44.5" fill="#c6f06a" />
<rect x="733.0" y="590.8" width="11.5" height="19.6" fill="#ffffff" />
<rect x="730.5" y="590.8" width="14.0" height="3.0" fill="#ffffff" />
<rect x="730.5" y="607.3" width="14.0" height="3.0" fill="#ffffff" />
<rect x="845.0" y="590.8" width="11.5" height="19.6" fill="#ffffff" />
<rect x="845.0" y="590.8" width="14.0" height="3.0" fill="#ffffff" />
<rect x="845.0" y="607.3" width="14.0" height="3.0" fill="#ffffff" />
<rect x="744.4" y="494.0" width="100.6" height="115.5" fill="#fdfdfd" />
<rect x="744.4" y="494.0" width="7.6" height="115.5" fill="url(#shL)" />
<rect x="742" y="491" width="106" height="30" rx="3" fill="none" stroke="#fdf3ea" stroke-width="1.3"/>
<rect x="744.4" y="494.0" width="100.6" height="115.5" fill="#fdfdfd" />
<rect x="744.4" y="494.0" width="7.6" height="115.5" fill="url(#shL)" />
<path d="M781 507 L808 507 L806 537 L784 537 Z" fill="#e4e4e4"/>
<rect x="831.0" y="514.0" width="2.5" height="41.0" fill="#c4c4c4" />
<rect x="750.0" y="599.0" width="90.0" height="8.0" fill="#00c400" />
<rect x="754.0" y="602.0" width="16.0" height="5.0" fill="#ffffff" />
<rect x="808.0" y="602.0" width="28.0" height="5.0" fill="#ffffff" />
<rect x="778.0" y="603.0" width="28.0" height="6.5" fill="#c8c8c8" />
<rect x="771.0" y="611.0" width="6.0" height="5.0" fill="#f7bf72" />
<rect x="781.2" y="611.0" width="6.0" height="5.0" fill="#f7bf72" />
<rect x="791.4" y="611.0" width="6.0" height="5.0" fill="#f7bf72" />
<rect x="801.6" y="611.0" width="6.0" height="5.0" fill="#f7bf72" />
<rect x="811.8" y="611.0" width="6.0" height="5.0" fill="#f7bf72" />
<text x="662.8" y="521.3" font-size="17.3" fill="#f9daf9" font-family="Liberation Sans" textLength="31" lengthAdjust="spacingAndGlyphs" stroke="#f9daf9" stroke-width="0.5">CN2</text>
<rect x="739.5" y="636.0" width="18.0" height="6.5" fill="#555" />
<path d="M735.5 632.0 L735.5 645.0 L761.0 645.0 L761.0 632.0" stroke="#fdf3ea" stroke-width="1.3" fill="none"/>
<text x="747.0" y="653.0" font-size="7.2" fill="#f9daf9" font-weight="bold" font-family="Liberation Sans" textLength="8.0" lengthAdjust="spacingAndGlyphs" stroke="#f9daf9" stroke-width="0.9" text-anchor="middle">C8</text>
<rect x="829.2" y="648.3" width="12.0" height="22.3" fill="none" stroke="#fdf3ea" stroke-width="1.3"/>
<rect x="831.7" y="650.8" width="7.0" height="17.3" fill="#f7bf72" />
<rect x="831.7" y="654.3" width="7.0" height="10.4" fill="#c4c4cc" />
<rect x="831.7" y="657.0" width="7.0" height="4.8" fill="#232323" />
<rect x="843.3" y="648.3" width="12.0" height="22.3" fill="none" stroke="#fdf3ea" stroke-width="1.3"/>
<rect x="845.8" y="650.8" width="7.0" height="17.3" fill="#f7bf72" />
<rect x="845.8" y="654.3" width="7.0" height="10.4" fill="#c4c4cc" />
<rect x="845.8" y="657.0" width="7.0" height="4.8" fill="#232323" />
<rect x="857.1" y="648.7" width="22.8" height="11.2" fill="none" stroke="#fdf3ea" stroke-width="1.3"/>
<rect x="859.6" y="651.2" width="17.8" height="6.2" fill="#f7bf72" />
<rect x="863.2" y="651.2" width="10.7" height="6.2" fill="#c4c4cc" />
<rect x="866.0" y="651.2" width="5.0" height="6.2" fill="#c46a08" />
<rect x="857.1" y="661.1" width="22.8" height="11.2" fill="none" stroke="#fdf3ea" stroke-width="1.3"/>
<rect x="859.6" y="663.6" width="17.8" height="6.2" fill="#f7bf72" />
<rect x="863.2" y="663.6" width="10.7" height="6.2" fill="#c4c4cc" />
<rect x="866.0" y="663.6" width="5.0" height="6.2" fill="#c46a08" />
<text x="884.0" y="659.0" font-size="9.0" fill="#f9daf9" font-weight="bold" font-family="Liberation Sans" textLength="15.3" lengthAdjust="spacingAndGlyphs" stroke="#f9daf9" stroke-width="0.9" text-anchor="start">C22</text>
<text x="884.0" y="671.0" font-size="9.0" fill="#f9daf9" font-weight="bold" font-family="Liberation Sans" textLength="15.3" lengthAdjust="spacingAndGlyphs" stroke="#f9daf9" stroke-width="0.9" text-anchor="start">C49</text>
<text transform="translate(838.0,645.0) rotate(-90)" font-size="9.6" fill="#f9daf9" font-weight="bold" font-family="Liberation Sans" textLength="9.0" lengthAdjust="spacingAndGlyphs" stroke="#f9daf9" stroke-width="0.9">R4</text>
<text transform="translate(852.0,645.0) rotate(-90)" font-size="9.6" fill="#f9daf9" font-weight="bold" font-family="Liberation Sans" textLength="9.0" lengthAdjust="spacingAndGlyphs" stroke="#f9daf9" stroke-width="0.9">R5</text>
<rect x="830.6" y="679.8" width="9.4" height="12.2" fill="#f7bf72" />
<rect x="868.0" y="679.8" width="7.5" height="12.2" fill="#f7bf72" />
<rect x="836.0" y="681.5" width="4.0" height="8.5" fill="#c4c4cc" />
<rect x="868.0" y="681.5" width="4.0" height="8.5" fill="#c4c4cc" />
<rect x="840.0" y="677.9" width="28.0" height="15.5" fill="#565656" />
<path d="M837.0 676.0 L870.0 676.0" stroke="#fdf3ea" stroke-width="1.3" fill="none"/>
<path d="M837.0 695.0 L870.0 695.0" stroke="#fdf3ea" stroke-width="1.3" fill="none"/>
<text x="820.0" y="690.0" font-size="8.4" fill="#f9daf9" font-weight="bold" font-family="Liberation Sans" textLength="9.5" lengthAdjust="spacingAndGlyphs" stroke="#f9daf9" stroke-width="0.9" text-anchor="start">D1</text>
<rect x="811.5" y="720.8" width="12.0" height="22.8" fill="none" stroke="#fdf3ea" stroke-width="1.3"/>
<rect x="814.0" y="723.3" width="7.0" height="17.8" fill="#f7bf72" />
<rect x="814.0" y="726.9" width="7.0" height="10.7" fill="#c4c4cc" />
<rect x="814.0" y="729.7" width="7.0" height="5.0" fill="#232323" />
<rect x="824.1" y="720.8" width="12.0" height="22.8" fill="none" stroke="#fdf3ea" stroke-width="1.3"/>
<rect x="826.6" y="723.3" width="7.0" height="17.8" fill="#f7bf72" />
<rect x="826.6" y="726.9" width="7.0" height="10.7" fill="#c4c4cc" />
<rect x="826.6" y="729.7" width="7.0" height="5.0" fill="#232323" />
<rect x="836.5" y="720.8" width="12.0" height="22.8" fill="none" stroke="#fdf3ea" stroke-width="1.3"/>
<rect x="839.0" y="723.3" width="7.0" height="17.8" fill="#f7bf72" />
<rect x="839.0" y="726.9" width="7.0" height="10.7" fill="#c4c4cc" />
<rect x="839.0" y="729.7" width="7.0" height="5.0" fill="#232323" />
<rect x="851.2" y="720.8" width="12.0" height="22.8" fill="none" stroke="#fdf3ea" stroke-width="1.3"/>
<rect x="853.7" y="723.3" width="7.0" height="17.8" fill="#f7bf72" />
<rect x="853.7" y="726.9" width="7.0" height="10.7" fill="#c4c4cc" />
<rect x="853.7" y="729.7" width="7.0" height="5.0" fill="#232323" />
<rect x="867.6" y="720.8" width="14.0" height="22.8" fill="none" stroke="#fdf3ea" stroke-width="1.3"/>
<rect x="870.1" y="723.3" width="9.0" height="17.8" fill="#f7bf72" />
<rect x="870.1" y="726.9" width="9.0" height="10.7" fill="#c4c4cc" />
<rect x="870.1" y="729.7" width="9.0" height="5.0" fill="#e04010" />
<rect x="885.9" y="720.8" width="11.0" height="22.8" fill="none" stroke="#fdf3ea" stroke-width="1.3"/>
<rect x="888.4" y="723.3" width="6.0" height="17.8" fill="#f7bf72" />
<rect x="888.4" y="726.9" width="6.0" height="10.7" fill="#c4c4cc" />
<rect x="888.4" y="729.7" width="6.0" height="5.0" fill="#ff6a10" />
<rect x="903.0" y="723.0" width="10.4" height="18.0" fill="#c4c4cc" />
<rect x="903.0" y="725.5" width="10.4" height="13.0" fill="#c46a08" />
<rect x="900.5" y="720.5" width="15.5" height="23.0" fill="none" stroke="#fdf3ea" stroke-width="1.3"/>
<text transform="translate(818.0,717.0) rotate(-90)" font-size="9.6" fill="#f9daf9" font-weight="bold" font-family="Liberation Sans" textLength="19.0" lengthAdjust="spacingAndGlyphs" stroke="#f9daf9" stroke-width="0.9">R88</text>
<text transform="translate(831.0,717.0) rotate(-90)" font-size="9.6" fill="#f9daf9" font-weight="bold" font-family="Liberation Sans" textLength="19.0" lengthAdjust="spacingAndGlyphs" stroke="#f9daf9" stroke-width="0.9">C23</text>
<text transform="translate(843.0,717.0) rotate(-90)" font-size="9.6" fill="#f9daf9" font-weight="bold" font-family="Liberation Sans" textLength="19.0" lengthAdjust="spacingAndGlyphs" stroke="#f9daf9" stroke-width="0.9">C45</text>
<text transform="translate(858.0,717.0) rotate(-90)" font-size="9.6" fill="#f9daf9" font-weight="bold" font-family="Liberation Sans" textLength="19.0" lengthAdjust="spacingAndGlyphs" stroke="#f9daf9" stroke-width="0.9">C11</text>
<text transform="translate(875.0,717.0) rotate(-90)" font-size="9.6" fill="#f9daf9" font-weight="bold" font-family="Liberation Sans" textLength="19.0" lengthAdjust="spacingAndGlyphs" stroke="#f9daf9" stroke-width="0.9">C8</text>
<text transform="translate(892.0,717.0) rotate(-90)" font-size="9.6" fill="#f9daf9" font-weight="bold" font-family="Liberation Sans" textLength="19.0" lengthAdjust="spacingAndGlyphs" stroke="#f9daf9" stroke-width="0.9">C45</text>
<text transform="translate(909.0,717.0) rotate(-90)" font-size="9.6" fill="#f9daf9" font-weight="bold" font-family="Liberation Sans" textLength="19.0" lengthAdjust="spacingAndGlyphs" stroke="#f9daf9" stroke-width="0.9">R12</text>
<text transform="translate(803.0,742.0) rotate(-90)" font-size="9.6" fill="#f9daf9" font-weight="bold" font-family="Liberation Sans" textLength="19.0" lengthAdjust="spacingAndGlyphs" stroke="#f9daf9" stroke-width="0.9">R23</text>
<rect x="555.8" y="719.5" width="221.0" height="221.0" fill="#2a2a2a" />
<path d="M778.0 719.5 L778.0 942.0 L555.8 942.0" stroke="#fdf3ea" stroke-width="1.8" fill="none"/>
<circle cx="578.3" cy="742.2" r="8" fill="#fff"/>
<text x="661.0" y="715.3" font-size="16.2" fill="#f9daf9" font-family="Liberation Sans" textLength="18.4" lengthAdjust="spacingAndGlyphs" stroke="#f9daf9" stroke-width="0.5">U1</text>
<rect x="868.5" y="757.2" width="12.0" height="23.0" fill="none" stroke="#fdf3ea" stroke-width="1.3"/>
<rect x="871.0" y="759.7" width="7.0" height="18.0" fill="#f7bf72" />
<rect x="871.0" y="763.3" width="7.0" height="10.8" fill="#c4c4cc" />
<rect x="871.0" y="766.2" width="7.0" height="5.0" fill="#232323" />
<rect x="882.1" y="757.2" width="12.0" height="23.0" fill="none" stroke="#fdf3ea" stroke-width="1.3"/>
<rect x="884.6" y="759.7" width="7.0" height="18.0" fill="#f7bf72" />
<rect x="884.6" y="763.3" width="7.0" height="10.8" fill="#c4c4cc" />
<rect x="884.6" y="766.2" width="7.0" height="5.0" fill="#232323" />
<rect x="787.5" y="807.2" width="7.0" height="17.5" fill="#f7bf72" />
<rect x="787.5" y="810.7" width="7.0" height="10.5" fill="#c4c4cc" />
<rect x="787.5" y="813.5" width="7.0" height="4.9" fill="#232323" />
<rect x="800.0" y="807.2" width="7.0" height="17.5" fill="#f7bf72" />
<rect x="800.0" y="810.7" width="7.0" height="10.5" fill="#c4c4cc" />
<rect x="800.0" y="813.5" width="7.0" height="4.9" fill="#232323" />
<rect x="813.6" y="807.2" width="7.0" height="17.5" fill="#f7bf72" />
<rect x="813.6" y="810.7" width="7.0" height="10.5" fill="#c4c4cc" />
<rect x="813.6" y="813.5" width="7.0" height="4.9" fill="#232323" />
<rect x="827.3" y="807.2" width="7.0" height="17.5" fill="#f7bf72" />
<rect x="827.3" y="810.7" width="7.0" height="10.5" fill="#c4c4cc" />
<rect x="827.3" y="813.5" width="7.0" height="4.9" fill="#232323" />
<path d="M789.0 803.0 L789.0 829.0" stroke="#fdf3ea" stroke-width="1.3" fill="none"/>
<path d="M802.0 803.0 L802.0 829.0" stroke="#fdf3ea" stroke-width="1.3" fill="none"/>
<path d="M816.0 803.0 L816.0 829.0" stroke="#fdf3ea" stroke-width="1.3" fill="none"/>
<path d="M829.0 803.0 L829.0 829.0" stroke="#fdf3ea" stroke-width="1.3" fill="none"/>
<path d="M843.0 803.0 L843.0 829.0" stroke="#fdf3ea" stroke-width="1.3" fill="none"/>
<rect x="875.6" y="802.5" width="12.0" height="23.0" fill="none" stroke="#fdf3ea" stroke-width="1.3"/>
<rect x="878.1" y="805.0" width="7.0" height="18.0" fill="#f7bf72" />
<rect x="878.1" y="808.6" width="7.0" height="10.8" fill="#c4c4cc" />
<rect x="878.1" y="811.5" width="7.0" height="5.0" fill="#232323" />
<rect x="890.3" y="802.5" width="12.0" height="23.0" fill="none" stroke="#fdf3ea" stroke-width="1.3"/>
<rect x="892.8" y="805.0" width="7.0" height="18.0" fill="#f7bf72" />
<rect x="892.8" y="808.6" width="7.0" height="10.8" fill="#c4c4cc" />
<rect x="892.8" y="811.5" width="7.0" height="5.0" fill="#232323" />
<rect x="904.5" y="802.5" width="12.0" height="23.0" fill="none" stroke="#fdf3ea" stroke-width="1.3"/>
<rect x="907.0" y="805.0" width="7.0" height="18.0" fill="#f7bf72" />
<rect x="907.0" y="808.6" width="7.0" height="10.8" fill="#c4c4cc" />
<rect x="907.0" y="811.5" width="7.0" height="5.0" fill="#232323" />
<rect x="918.7" y="802.5" width="12.0" height="23.0" fill="none" stroke="#fdf3ea" stroke-width="1.3"/>
<rect x="921.2" y="805.0" width="7.0" height="18.0" fill="#f7bf72" />
<rect x="921.2" y="808.6" width="7.0" height="10.8" fill="#c4c4cc" />
<rect x="921.2" y="811.5" width="7.0" height="5.0" fill="#232323" />
<rect x="797.5" y="840.2" width="12.0" height="23.0" fill="none" stroke="#fdf3ea" stroke-width="1.3"/>
<rect x="800.0" y="842.7" width="7.0" height="18.0" fill="#f7bf72" />
<rect x="800.0" y="846.3" width="7.0" height="10.8" fill="#c4c4cc" />
<rect x="800.0" y="849.2" width="7.0" height="5.0" fill="#232323" />
<rect x="811.1" y="840.2" width="12.0" height="23.0" fill="none" stroke="#fdf3ea" stroke-width="1.3"/>
<rect x="813.6" y="842.7" width="7.0" height="18.0" fill="#f7bf72" />
<rect x="813.6" y="846.3" width="7.0" height="10.8" fill="#c4c4cc" />
<rect x="813.6" y="849.2" width="7.0" height="5.0" fill="#232323" />
<rect x="824.2" y="840.2" width="12.0" height="23.0" fill="none" stroke="#fdf3ea" stroke-width="1.3"/>
<rect x="826.7" y="842.7" width="7.0" height="18.0" fill="#f7bf72" />
<rect x="826.7" y="846.3" width="7.0" height="10.8" fill="#c4c4cc" />
<rect x="826.7" y="849.2" width="7.0" height="5.0" fill="#232323" />
<rect x="848.8" y="838.5" width="12.0" height="23.0" fill="none" stroke="#fdf3ea" stroke-width="1.3"/>
<rect x="851.3" y="841.0" width="7.0" height="18.0" fill="#f7bf72" />
<rect x="851.3" y="844.6" width="7.0" height="10.8" fill="#c4c4cc" />
<rect x="851.3" y="847.5" width="7.0" height="5.0" fill="#232323" />
<rect x="863.0" y="838.5" width="12.0" height="23.0" fill="none" stroke="#fdf3ea" stroke-width="1.3"/>
<rect x="865.5" y="841.0" width="7.0" height="18.0" fill="#f7bf72" />
<rect x="865.5" y="844.6" width="7.0" height="10.8" fill="#c4c4cc" />
<rect x="865.5" y="847.5" width="7.0" height="5.0" fill="#232323" />
<rect x="907.6" y="839.4" width="7.0" height="18.0" fill="#f7bf72" />
<rect x="907.6" y="843.0" width="7.0" height="10.8" fill="#c4c4cc" />
<rect x="907.6" y="845.9" width="7.0" height="5.0" fill="#232323" />
<rect x="921.2" y="839.4" width="7.0" height="18.0" fill="#f7bf72" />
<rect x="921.2" y="843.0" width="7.0" height="10.8" fill="#c4c4cc" />
<rect x="921.2" y="845.9" width="7.0" height="5.0" fill="#232323" />
<path d="M904.0 836.0 L904.0 861.0 L917.0 861.0" stroke="#fdf3ea" stroke-width="1.3" fill="none"/>
<path d="M917.0 836.0 L931.0 836.0 L931.0 861.0" stroke="#fdf3ea" stroke-width="1.3" fill="none"/>
<circle cx="848.3" cy="757.5" r="5" fill="#f7bf72"/>
<circle cx="819.3" cy="777.1" r="5" fill="#f7bf72"/>
<circle cx="848.3" cy="782.6" r="5" fill="#f7bf72"/>
<circle cx="811.7" cy="796.3" r="5" fill="#f7bf72"/>
<circle cx="789.8" cy="850.3" r="5" fill="#f7bf72"/>
<text x="838.0" y="752.0" font-size="7.8" fill="#f9daf9" font-weight="bold" font-family="Liberation Sans" textLength="17.7" lengthAdjust="spacingAndGlyphs" stroke="#f9daf9" stroke-width="0.9" text-anchor="start">TP93</text>
<text x="816.0" y="771.0" font-size="7.8" fill="#f9daf9" font-weight="bold" font-family="Liberation Sans" textLength="17.7" lengthAdjust="spacingAndGlyphs" stroke="#f9daf9" stroke-width="0.9" text-anchor="start">TP92</text>
<text x="788.0" y="837.0" font-size="7.8" fill="#f9daf9" font-weight="bold" font-family="Liberation Sans" textLength="17.7" lengthAdjust="spacingAndGlyphs" stroke="#f9daf9" stroke-width="0.9" text-anchor="start">TP76</text>
<text transform="translate(930.0,776.0) rotate(-90)" font-size="9.6" fill="#f9daf9" font-weight="bold" font-family="Liberation Sans" textLength="19.0" lengthAdjust="spacingAndGlyphs" stroke="#f9daf9" stroke-width="0.9">R22</text>
<text transform="translate(915.0,776.0) rotate(-90)" font-size="9.6" fill="#f9daf9" font-weight="bold" font-family="Liberation Sans" textLength="19.0" lengthAdjust="spacingAndGlyphs" stroke="#f9daf9" stroke-width="0.9">R30</text>
<text transform="translate(881.0,797.0) rotate(-90)" font-size="9.6" fill="#f9daf9" font-weight="bold" font-family="Liberation Sans" textLength="19.0" lengthAdjust="spacingAndGlyphs" stroke="#f9daf9" stroke-width="0.9">C11</text>
<text transform="translate(896.0,797.0) rotate(-90)" font-size="9.6" fill="#f9daf9" font-weight="bold" font-family="Liberation Sans" textLength="19.0" lengthAdjust="spacingAndGlyphs" stroke="#f9daf9" stroke-width="0.9">C45</text>
<text transform="translate(910.0,797.0) rotate(-90)" font-size="9.6" fill="#f9daf9" font-weight="bold" font-family="Liberation Sans" textLength="19.0" lengthAdjust="spacingAndGlyphs" stroke="#f9daf9" stroke-width="0.9">R12</text>
<text transform="translate(924.0,797.0) rotate(-90)" font-size="9.6" fill="#f9daf9" font-weight="bold" font-family="Liberation Sans" textLength="19.0" lengthAdjust="spacingAndGlyphs" stroke="#f9daf9" stroke-width="0.9">R88</text>
<text transform="translate(790.0,801.0) rotate(-90)" font-size="9.6" fill="#f9daf9" font-weight="bold" font-family="Liberation Sans" textLength="19.0" lengthAdjust="spacingAndGlyphs" stroke="#f9daf9" stroke-width="0.9">R21</text>
<text transform="translate(803.0,801.0) rotate(-90)" font-size="9.6" fill="#f9daf9" font-weight="bold" font-family="Liberation Sans" textLength="19.0" lengthAdjust="spacingAndGlyphs" stroke="#f9daf9" stroke-width="0.9">R12</text>
<text transform="translate(817.0,801.0) rotate(-90)" font-size="9.6" fill="#f9daf9" font-weight="bold" font-family="Liberation Sans" textLength="19.0" lengthAdjust="spacingAndGlyphs" stroke="#f9daf9" stroke-width="0.9">R12</text>
<text transform="translate(830.0,801.0) rotate(-90)" font-size="9.6" fill="#f9daf9" font-weight="bold" font-family="Liberation Sans" textLength="19.0" lengthAdjust="spacingAndGlyphs" stroke="#f9daf9" stroke-width="0.9">C23</text>
<text transform="translate(854.0,835.0) rotate(-90)" font-size="9.6" fill="#f9daf9" font-weight="bold" font-family="Liberation Sans" textLength="19.0" lengthAdjust="spacingAndGlyphs" stroke="#f9daf9" stroke-width="0.9">R88</text>
<text transform="translate(869.0,835.0) rotate(-90)" font-size="9.6" fill="#f9daf9" font-weight="bold" font-family="Liberation Sans" textLength="19.0" lengthAdjust="spacingAndGlyphs" stroke="#f9daf9" stroke-width="0.9">R5</text>
<text transform="translate(932.0,860.0) rotate(-90)" font-size="9.6" fill="#f9daf9" font-weight="bold" font-family="Liberation Sans" textLength="19.0" lengthAdjust="spacingAndGlyphs" stroke="#f9daf9" stroke-width="0.9">R14</text>
<text transform="translate(905.0,848.0) rotate(-90)" font-size="9.6" fill="#f9daf9" font-weight="bold" font-family="Liberation Sans" textLength="19.0" lengthAdjust="spacingAndGlyphs" stroke="#f9daf9" stroke-width="0.9">R7</text>
<rect x="804.6" y="894.4" width="7.0" height="19.0" fill="#f7bf72" />
<rect x="804.6" y="898.2" width="7.0" height="11.4" fill="#c4c4cc" />
<rect x="804.6" y="901.2" width="7.0" height="5.3" fill="#232323" />
<rect x="818.2" y="894.4" width="7.0" height="19.0" fill="#f7bf72" />
<rect x="818.2" y="898.2" width="7.0" height="11.4" fill="#c4c4cc" />
<rect x="818.2" y="901.2" width="7.0" height="5.3" fill="#232323" />
<rect x="832.7" y="894.4" width="7.0" height="19.0" fill="#f7bf72" />
<rect x="832.7" y="898.2" width="7.0" height="11.4" fill="#c4c4cc" />
<rect x="832.7" y="901.2" width="7.0" height="5.3" fill="#ff6a10" />
<rect x="847.4" y="894.4" width="7.0" height="19.0" fill="#f7bf72" />
<rect x="847.4" y="898.2" width="7.0" height="11.4" fill="#c4c4cc" />
<rect x="847.4" y="901.2" width="7.0" height="5.3" fill="#232323" />
<rect x="860.3" y="894.4" width="7.0" height="19.0" fill="#f7bf72" />
<rect x="860.3" y="898.2" width="7.0" height="11.4" fill="#c4c4cc" />
<rect x="860.3" y="901.2" width="7.0" height="5.3" fill="#232323" />
<rect x="874.8" y="894.4" width="7.0" height="19.0" fill="#f7bf72" />
<rect x="874.8" y="898.2" width="7.0" height="11.4" fill="#c4c4cc" />
<rect x="874.8" y="901.2" width="7.0" height="5.3" fill="#232323" />
<rect x="887.5" y="894.4" width="7.0" height="19.0" fill="#f7bf72" />
<rect x="887.5" y="898.2" width="7.0" height="11.4" fill="#c4c4cc" />
<rect x="887.5" y="901.2" width="7.0" height="5.3" fill="#232323" />
<path d="M801.5 891.0 L801.5 917.0" stroke="#fdf3ea" stroke-width="1.3" fill="none"/>
<path d="M815.5 891.0 L815.5 917.0" stroke="#fdf3ea" stroke-width="1.3" fill="none"/>
<path d="M843.5 891.0 L843.5 917.0" stroke="#fdf3ea" stroke-width="1.3" fill="none"/>
<path d="M857.5 891.0 L857.5 917.0" stroke="#fdf3ea" stroke-width="1.3" fill="none"/>
<path d="M870.5 891.0 L870.5 917.0" stroke="#fdf3ea" stroke-width="1.3" fill="none"/>
<path d="M884.5 891.0 L884.5 917.0" stroke="#fdf3ea" stroke-width="1.3" fill="none"/>
<rect x="827" y="890" width="18" height="27" rx="4" fill="none" stroke="#fdf3ea" stroke-width="1.3"/>
<path d="M801.0 904.0 L899.0 904.0" stroke="#fdf3ea" stroke-width="1.0" fill="none"/>
<circle cx="792.0" cy="875.4" r="5" fill="#f7bf72"/>
<circle cx="819.3" cy="879.0" r="5" fill="#f7bf72"/>
<circle cx="845.3" cy="881.0" r="5" fill="#f7bf72"/>
<circle cx="789.8" cy="890.9" r="5" fill="#f7bf72"/>
<text transform="translate(802.0,886.0) rotate(-90)" font-size="9.6" fill="#f9daf9" font-weight="bold" font-family="Liberation Sans" textLength="19.0" lengthAdjust="spacingAndGlyphs" stroke="#f9daf9" stroke-width="0.9">C8</text>
<text transform="translate(828.0,886.0) rotate(-90)" font-size="9.6" fill="#f9daf9" font-weight="bold" font-family="Liberation Sans" textLength="19.0" lengthAdjust="spacingAndGlyphs" stroke="#f9daf9" stroke-width="0.9">R21</text>
<text transform="translate(851.0,886.0) rotate(-90)" font-size="9.6" fill="#f9daf9" font-weight="bold" font-family="Liberation Sans" textLength="19.0" lengthAdjust="spacingAndGlyphs" stroke="#f9daf9" stroke-width="0.9">R5</text>
<text transform="translate(800.0,910.0) rotate(-90)" font-size="9.6" fill="#f9daf9" font-weight="bold" font-family="Liberation Sans" textLength="19.0" lengthAdjust="spacingAndGlyphs" stroke="#f9daf9" stroke-width="0.9">TP75</text>
<rect x="917.6" y="872.2" width="19.7" height="7.0" fill="#f7bf72" />
<rect x="921.5" y="872.2" width="11.8" height="7.0" fill="#c4c4cc" />
<rect x="924.7" y="872.2" width="5.5" height="7.0" fill="#232323" />
<rect x="917.6" y="886.0" width="19.7" height="7.0" fill="#f7bf72" />
<rect x="921.5" y="886.0" width="11.8" height="7.0" fill="#c4c4cc" />
<rect x="924.7" y="886.0" width="5.5" height="7.0" fill="#232323" />
<rect x="917.6" y="901.2" width="19.7" height="7.0" fill="#f7bf72" />
<rect x="921.5" y="901.2" width="11.8" height="7.0" fill="#c4c4cc" />
<rect x="924.7" y="901.2" width="5.5" height="7.0" fill="#232323" />
<rect x="917.6" y="913.4" width="19.7" height="7.0" fill="#f7bf72" />
<rect x="921.5" y="913.4" width="11.8" height="7.0" fill="#c4c4cc" />
<rect x="924.7" y="913.4" width="5.5" height="7.0" fill="#232323" />
<path d="M915.0 869.0 L940.0 869.0" stroke="#fdf3ea" stroke-width="1.3" fill="none"/>
<path d="M915.0 882.5 L940.0 882.5" stroke="#fdf3ea" stroke-width="1.3" fill="none"/>
<path d="M915.0 897.5 L940.0 897.5" stroke="#fdf3ea" stroke-width="1.3" fill="none"/>
<path d="M915.0 910.5 L940.0 910.5" stroke="#fdf3ea" stroke-width="1.3" fill="none"/>
<path d="M915.0 924.0 L940.0 924.0" stroke="#fdf3ea" stroke-width="1.3" fill="none"/>
<text x="944.0" y="879.0" font-size="9.0" fill="#f9daf9" font-weight="bold" font-family="Liberation Sans" textLength="15.3" lengthAdjust="spacingAndGlyphs" stroke="#f9daf9" stroke-width="0.9" text-anchor="start">R16</text>
<text x="944.0" y="893.0" font-size="9.0" fill="#f9daf9" font-weight="bold" font-family="Liberation Sans" textLength="15.3" lengthAdjust="spacingAndGlyphs" stroke="#f9daf9" stroke-width="0.9" text-anchor="start">R15</text>
<text x="944.0" y="908.0" font-size="9.0" fill="#f9daf9" font-weight="bold" font-family="Liberation Sans" textLength="15.3" lengthAdjust="spacingAndGlyphs" stroke="#f9daf9" stroke-width="0.9" text-anchor="start">R14</text>
<text x="944.0" y="920.0" font-size="9.0" fill="#f9daf9" font-weight="bold" font-family="Liberation Sans" textLength="15.3" lengthAdjust="spacingAndGlyphs" stroke="#f9daf9" stroke-width="0.9" text-anchor="start">R13</text>
<rect x="802.1" y="933.3" width="12.0" height="22.6" fill="none" stroke="#fdf3ea" stroke-width="1.3"/>
<rect x="804.6" y="935.8" width="7.0" height="17.6" fill="#f7bf72" />
<rect x="804.6" y="939.3" width="7.0" height="10.6" fill="#c4c4cc" />
<rect x="804.6" y="942.1" width="7.0" height="4.9" fill="#232323" />
<rect x="829.5" y="933.3" width="12.0" height="22.6" fill="none" stroke="#fdf3ea" stroke-width="1.3"/>
<rect x="832.0" y="935.8" width="7.0" height="17.6" fill="#f7bf72" />
<rect x="832.0" y="939.3" width="7.0" height="10.6" fill="#c4c4cc" />
<rect x="832.0" y="942.1" width="7.0" height="4.9" fill="#232323" />
<text transform="translate(798.0,956.0) rotate(-90)" font-size="9.6" fill="#f9daf9" font-weight="bold" font-family="Liberation Sans" textLength="19.0" lengthAdjust="spacingAndGlyphs" stroke="#f9daf9" stroke-width="0.9">C53</text>
<text x="845.0" y="950.0" font-size="9.0" fill="#f9daf9" font-weight="bold" font-family="Liberation Sans" textLength="10.2" lengthAdjust="spacingAndGlyphs" stroke="#f9daf9" stroke-width="0.9" text-anchor="start">R2</text>
<circle cx="818.2" cy="968.8" r="5" fill="#f7bf72"/>
<circle cx="841.8" cy="968.8" r="5" fill="#f7bf72"/>
<text x="793.0" y="973.0" font-size="7.8" fill="#f9daf9" font-weight="bold" font-family="Liberation Sans" textLength="17.7" lengthAdjust="spacingAndGlyphs" stroke="#f9daf9" stroke-width="0.9" text-anchor="start">TP78</text>
<text x="851.0" y="973.0" font-size="7.8" fill="#f9daf9" font-weight="bold" font-family="Liberation Sans" textLength="17.7" lengthAdjust="spacingAndGlyphs" stroke="#f9daf9" stroke-width="0.9" text-anchor="start">TP79</text>
<text transform="translate(896.0,956.0) rotate(-90)" font-size="9.6" fill="#f9daf9" font-weight="bold" font-family="Liberation Sans" textLength="19.0" lengthAdjust="spacingAndGlyphs" stroke="#f9daf9" stroke-width="0.9">R3</text>
<text transform="translate(905.0,956.0) rotate(-90)" font-size="9.6" fill="#f9daf9" font-weight="bold" font-family="Liberation Sans" textLength="19.0" lengthAdjust="spacingAndGlyphs" stroke="#f9daf9" stroke-width="0.9">R3</text>
<text transform="translate(917.0,956.0) rotate(-90)" font-size="9.6" fill="#f9daf9" font-weight="bold" font-family="Liberation Sans" textLength="19.0" lengthAdjust="spacingAndGlyphs" stroke="#f9daf9" stroke-width="0.9">R3</text>
<text transform="translate(929.0,956.0) rotate(-90)" font-size="9.6" fill="#f9daf9" font-weight="bold" font-family="Liberation Sans" textLength="19.0" lengthAdjust="spacingAndGlyphs" stroke="#f9daf9" stroke-width="0.9">R3</text>
<text transform="translate(941.0,956.0) rotate(-90)" font-size="9.6" fill="#f9daf9" font-weight="bold" font-family="Liberation Sans" textLength="19.0" lengthAdjust="spacingAndGlyphs" stroke="#f9daf9" stroke-width="0.9">R3</text>
<text transform="translate(951.0,956.0) rotate(-90)" font-size="9.6" fill="#f9daf9" font-weight="bold" font-family="Liberation Sans" textLength="19.0" lengthAdjust="spacingAndGlyphs" stroke="#f9daf9" stroke-width="0.9">R3</text>
<text transform="translate(962.0,956.0) rotate(-90)" font-size="9.6" fill="#f9daf9" font-weight="bold" font-family="Liberation Sans" textLength="19.0" lengthAdjust="spacingAndGlyphs" stroke="#f9daf9" stroke-width="0.9">R3</text>
<rect x="804.6" y="984.3" width="7.0" height="19.0" fill="#f7bf72" />
<rect x="804.6" y="988.1" width="7.0" height="11.4" fill="#c4c4cc" />
<rect x="804.6" y="991.1" width="7.0" height="5.3" fill="#232323" />
<rect x="817.5" y="984.3" width="7.0" height="19.0" fill="#f7bf72" />
<rect x="817.5" y="988.1" width="7.0" height="11.4" fill="#c4c4cc" />
<rect x="817.5" y="991.1" width="7.0" height="5.3" fill="#232323" />
<rect x="830.2" y="984.3" width="7.0" height="19.0" fill="#f7bf72" />
<rect x="830.2" y="988.1" width="7.0" height="11.4" fill="#c4c4cc" />
<rect x="830.2" y="991.1" width="7.0" height="5.3" fill="#232323" />
<rect x="843.2" y="984.3" width="7.0" height="19.0" fill="#f7bf72" />
<rect x="843.2" y="988.1" width="7.0" height="11.4" fill="#c4c4cc" />
<rect x="843.2" y="991.1" width="7.0" height="5.3" fill="#232323" />
<rect x="856.5" y="984.3" width="7.0" height="19.0" fill="#f7bf72" />
<rect x="856.5" y="988.1" width="7.0" height="11.4" fill="#c4c4cc" />
<rect x="856.5" y="991.1" width="7.0" height="5.3" fill="#232323" />
<rect x="869.2" y="984.3" width="7.0" height="19.0" fill="#f7bf72" />
<rect x="869.2" y="988.1" width="7.0" height="11.4" fill="#c4c4cc" />
<rect x="869.2" y="991.1" width="7.0" height="5.3" fill="#232323" />
<rect x="882.8" y="984.3" width="7.0" height="19.0" fill="#f7bf72" />
<rect x="882.8" y="988.1" width="7.0" height="11.4" fill="#c4c4cc" />
<rect x="882.8" y="991.1" width="7.0" height="5.3" fill="#232323" />
<rect x="801.5" y="981.5" width="90.5" height="24.5" fill="none" stroke="#fdf3ea" stroke-width="1.3"/>
<path d="M815.0 981.5 L815.0 1006.0" stroke="#fdf3ea" stroke-width="1.3" fill="none"/>
<path d="M827.0 981.5 L827.0 1006.0" stroke="#fdf3ea" stroke-width="1.3" fill="none"/>
<path d="M840.0 981.5 L840.0 1006.0" stroke="#fdf3ea" stroke-width="1.3" fill="none"/>
<path d="M853.0 981.5 L853.0 1006.0" stroke="#fdf3ea" stroke-width="1.3" fill="none"/>
<path d="M866.0 981.5 L866.0 1006.0" stroke="#fdf3ea" stroke-width="1.3" fill="none"/>
<path d="M879.0 981.5 L879.0 1006.0" stroke="#fdf3ea" stroke-width="1.3" fill="none"/>
<text transform="translate(808.0,1030.0) rotate(-90)" font-size="9.6" fill="#f9daf9" font-weight="bold" font-family="Liberation Sans" textLength="19.0" lengthAdjust="spacingAndGlyphs" stroke="#f9daf9" stroke-width="0.9">R5</text>
<text transform="translate(821.0,1030.0) rotate(-90)" font-size="9.6" fill="#f9daf9" font-weight="bold" font-family="Liberation Sans" textLength="19.0" lengthAdjust="spacingAndGlyphs" stroke="#f9daf9" stroke-width="0.9">R21</text>
<text transform="translate(834.0,1030.0) rotate(-90)" font-size="9.6" fill="#f9daf9" font-weight="bold" font-family="Liberation Sans" textLength="19.0" lengthAdjust="spacingAndGlyphs" stroke="#f9daf9" stroke-width="0.9">C11</text>
<text transform="translate(847.0,1030.0) rotate(-90)" font-size="9.6" fill="#f9daf9" font-weight="bold" font-family="Liberation Sans" textLength="19.0" lengthAdjust="spacingAndGlyphs" stroke="#f9daf9" stroke-width="0.9">R88</text>
<text transform="translate(860.0,1030.0) rotate(-90)" font-size="9.6" fill="#f9daf9" font-weight="bold" font-family="Liberation Sans" textLength="19.0" lengthAdjust="spacingAndGlyphs" stroke="#f9daf9" stroke-width="0.9">C45</text>
<text transform="translate(873.0,1030.0) rotate(-90)" font-size="9.6" fill="#f9daf9" font-weight="bold" font-family="Liberation Sans" textLength="19.0" lengthAdjust="spacingAndGlyphs" stroke="#f9daf9" stroke-width="0.9">R88</text>
<text transform="translate(886.0,1030.0) rotate(-90)" font-size="9.6" fill="#f9daf9" font-weight="bold" font-family="Liberation Sans" textLength="19.0" lengthAdjust="spacingAndGlyphs" stroke="#f9daf9" stroke-width="0.9">R12</text>
<rect x="506.4" y="815.2" width="6.5" height="18.8" fill="#f7bf72" />
<rect x="506.4" y="819.0" width="6.5" height="11.3" fill="#c4c4cc" />
<rect x="506.4" y="822.0" width="6.5" height="5.3" fill="#232323" />
<path d="M515.5 812.5 L504.0 812.5 L504.0 837.0 L515.5 837.0" stroke="#fdf3ea" stroke-width="1.3" fill="none"/>
<text transform="translate(498.0,835.0) rotate(-90)" font-size="9.6" fill="#f9daf9" font-weight="bold" font-family="Liberation Sans" textLength="19.0" lengthAdjust="spacingAndGlyphs" stroke="#f9daf9" stroke-width="0.9">R81</text>
<text x="513.0" y="872.0" font-size="7.8" fill="#f9daf9" font-weight="bold" font-family="Liberation Sans" textLength="17.7" lengthAdjust="spacingAndGlyphs" stroke="#f9daf9" stroke-width="0.9" text-anchor="start">TP48</text>
<rect x="276.0" y="958.0" width="8.0" height="14.0" fill="#fff0e0" />
<rect x="452.0" y="958.0" width="7.0" height="14.0" fill="#fff0e0" />
<rect x="283.8" y="906.9" width="168.4" height="115.2" fill="#2a2a2a" />
<circle cx="435.3" cy="922.7" r="8" fill="#fff"/>
<path d="M446.0 900.0 L459.0 912.0 L459.0 1029.0 L276.0 1029.0" stroke="#fdf3ea" stroke-width="1.4" fill="none"/>
<text x="218.0" y="971.0" font-size="15.9" fill="#f9daf9" font-family="Liberation Sans" textLength="40" lengthAdjust="spacingAndGlyphs" stroke="#f9daf9" stroke-width="0.5">U205</text>
<rect x="293.4" y="868.5" width="12.0" height="24.0" fill="none" stroke="#fdf3ea" stroke-width="1.3"/>
<rect x="295.9" y="871.0" width="7.0" height="19.0" fill="#f7bf72" />
<rect x="295.9" y="874.8" width="7.0" height="11.4" fill="#c4c4cc" />
<rect x="295.9" y="877.8" width="7.0" height="5.3" fill="#c46a08" />
<rect x="309.4" y="868.5" width="12.0" height="24.0" fill="none" stroke="#fdf3ea" stroke-width="1.3"/>
<rect x="311.9" y="871.0" width="7.0" height="19.0" fill="#f7bf72" />
<rect x="311.9" y="874.8" width="7.0" height="11.4" fill="#c4c4cc" />
<rect x="311.9" y="877.8" width="7.0" height="5.3" fill="#c46a08" />
<rect x="325.0" y="868.5" width="12.0" height="24.0" fill="none" stroke="#fdf3ea" stroke-width="1.3"/>
<rect x="327.5" y="871.0" width="7.0" height="19.0" fill="#f7bf72" />
<rect x="327.5" y="874.8" width="7.0" height="11.4" fill="#c4c4cc" />
<rect x="327.5" y="877.8" width="7.0" height="5.3" fill="#c46a08" />
<text transform="translate(299.0,866.0) rotate(-90)" font-size="9.6" fill="#f9daf9" font-weight="bold" font-family="Liberation Sans" textLength="19.0" lengthAdjust="spacingAndGlyphs" stroke="#f9daf9" stroke-width="0.9">C11</text>
<text transform="translate(315.0,866.0) rotate(-90)" font-size="9.6" fill="#f9daf9" font-weight="bold" font-family="Liberation Sans" textLength="19.0" lengthAdjust="spacingAndGlyphs" stroke="#f9daf9" stroke-width="0.9">R5</text>
<text transform="translate(331.0,866.0) rotate(-90)" font-size="9.6" fill="#f9daf9" font-weight="bold" font-family="Liberation Sans" textLength="19.0" lengthAdjust="spacingAndGlyphs" stroke="#f9daf9" stroke-width="0.9">R21</text>
<rect x="380.4" y="868.5" width="12.0" height="24.0" fill="none" stroke="#fdf3ea" stroke-width="1.3"/>
<rect x="382.9" y="871.0" width="7.0" height="19.0" fill="#f7bf72" />
<rect x="382.9" y="874.8" width="7.0" height="11.4" fill="#c4c4cc" />
<rect x="382.9" y="877.8" width="7.0" height="5.3" fill="#c46a08" />
<text transform="translate(375.0,893.0) rotate(-90)" font-size="9.6" fill="#f9daf9" font-weight="bold" font-family="Liberation Sans" textLength="19.0" lengthAdjust="spacingAndGlyphs" stroke="#f9daf9" stroke-width="0.9">C27</text>
<rect x="399.0" y="884.8" width="19.0" height="7.3" fill="#f7bf72" />
<rect x="402.8" y="884.8" width="11.4" height="7.3" fill="#c4c4cc" />
<rect x="405.8" y="884.8" width="5.3" height="7.3" fill="#c46a08" />
<rect x="424.4" y="884.8" width="19.0" height="7.3" fill="#f7bf72" />
<rect x="428.2" y="884.8" width="11.4" height="7.3" fill="#c4c4cc" />
<rect x="431.2" y="884.8" width="5.3" height="7.3" fill="#c46a08" />
<rect x="449.6" y="884.8" width="19.0" height="7.3" fill="#f7bf72" />
<rect x="453.4" y="884.8" width="11.4" height="7.3" fill="#c4c4cc" />
<rect x="456.4" y="884.8" width="5.3" height="7.3" fill="#c46a08" />
<rect x="396.0" y="881.0" width="75.0" height="14.5" fill="none" stroke="#fdf3ea" stroke-width="1.3"/>
<path d="M421.0 881.0 L421.0 895.5" stroke="#fdf3ea" stroke-width="1.3" fill="none"/>
<path d="M446.5 881.0 L446.5 895.5" stroke="#fdf3ea" stroke-width="1.3" fill="none"/>
<text x="414.0" y="879.0" font-size="9.0" fill="#f9daf9" font-weight="bold" font-family="Liberation Sans" textLength="15.3" lengthAdjust="spacingAndGlyphs" stroke="#f9daf9" stroke-width="0.9" text-anchor="start">C25</text>
<text x="478.0" y="891.0" font-size="9.0" fill="#f9daf9" font-weight="bold" font-family="Liberation Sans" textLength="15.3" lengthAdjust="spacingAndGlyphs" stroke="#f9daf9" stroke-width="0.9" text-anchor="start">C29</text>
<text x="397.0" y="906.0" font-size="8.4" fill="#f9daf9" font-weight="bold" font-family="Liberation Sans" textLength="14.3" lengthAdjust="spacingAndGlyphs" stroke="#f9daf9" stroke-width="0.9" text-anchor="start">C26</text>
<rect x="248.1" y="922.2" width="23.9" height="11.5" fill="none" stroke="#fdf3ea" stroke-width="1.3"/>
<rect x="250.6" y="924.8" width="18.9" height="6.5" fill="#f7bf72" />
<rect x="254.4" y="924.8" width="11.3" height="6.5" fill="#c4c4cc" />
<rect x="257.4" y="924.8" width="5.3" height="6.5" fill="#232323" />
<rect x="248.1" y="935.9" width="23.9" height="11.5" fill="none" stroke="#fdf3ea" stroke-width="1.3"/>
<rect x="250.6" y="938.4" width="18.9" height="6.5" fill="#f7bf72" />
<rect x="254.4" y="938.4" width="11.3" height="6.5" fill="#c4c4cc" />
<rect x="257.4" y="938.4" width="5.3" height="6.5" fill="#232323" />
<text x="220.0" y="931.0" font-size="7.8" fill="#f9daf9" font-weight="bold" font-family="Liberation Sans" textLength="17.7" lengthAdjust="spacingAndGlyphs" stroke="#f9daf9" stroke-width="0.9" text-anchor="start">R224</text>
<text x="220.0" y="944.0" font-size="7.8" fill="#f9daf9" font-weight="bold" font-family="Liberation Sans" textLength="17.7" lengthAdjust="spacingAndGlyphs" stroke="#f9daf9" stroke-width="0.9" text-anchor="start">R227</text>
<rect x="274.7" y="1035.0" width="12.0" height="25.0" fill="none" stroke="#fdf3ea" stroke-width="1.3"/>
<rect x="277.2" y="1037.5" width="7.0" height="20.0" fill="#f7bf72" />
<rect x="277.2" y="1041.5" width="7.0" height="12.0" fill="#c4c4cc" />
<rect x="277.2" y="1044.7" width="7.0" height="5.6" fill="#c46a08" />
<rect x="289.8" y="1035.0" width="12.0" height="25.0" fill="none" stroke="#fdf3ea" stroke-width="1.3"/>
<rect x="292.3" y="1037.5" width="7.0" height="20.0" fill="#f7bf72" />
<rect x="292.3" y="1041.5" width="7.0" height="12.0" fill="#c4c4cc" />
<rect x="292.3" y="1044.7" width="7.0" height="5.6" fill="#c46a08" />
<rect x="305.2" y="1035.0" width="12.0" height="25.0" fill="none" stroke="#fdf3ea" stroke-width="1.3"/>
<rect x="307.7" y="1037.5" width="7.0" height="20.0" fill="#f7bf72" />
<rect x="307.7" y="1041.5" width="7.0" height="12.0" fill="#c4c4cc" />
<rect x="307.7" y="1044.7" width="7.0" height="5.6" fill="#c46a08" />
<rect x="320.4" y="1035.0" width="12.0" height="25.0" fill="none" stroke="#fdf3ea" stroke-width="1.3"/>
<rect x="322.9" y="1037.5" width="7.0" height="20.0" fill="#f7bf72" />
<rect x="322.9" y="1041.5" width="7.0" height="12.0" fill="#c4c4cc" />
<rect x="322.9" y="1044.7" width="7.0" height="5.6" fill="#c46a08" />
<rect x="350.3" y="1035.0" width="12.0" height="25.0" fill="none" stroke="#fdf3ea" stroke-width="1.3"/>
<rect x="352.8" y="1037.5" width="7.0" height="20.0" fill="#f7bf72" />
<rect x="352.8" y="1041.5" width="7.0" height="12.0" fill="#c4c4cc" />
<rect x="352.8" y="1044.7" width="7.0" height="5.6" fill="#c46a08" />
<rect x="371.6" y="1035.0" width="12.0" height="25.0" fill="none" stroke="#fdf3ea" stroke-width="1.3"/>
<rect x="374.1" y="1037.5" width="7.0" height="20.0" fill="#f7bf72" />
<rect x="374.1" y="1041.5" width="7.0" height="12.0" fill="#c4c4cc" />
<rect x="374.1" y="1044.7" width="7.0" height="5.6" fill="#c46a08" />
<rect x="396.7" y="1035.0" width="12.0" height="25.0" fill="none" stroke="#fdf3ea" stroke-width="1.3"/>
<rect x="399.2" y="1037.5" width="7.0" height="20.0" fill="#f7bf72" />
<rect x="399.2" y="1041.5" width="7.0" height="12.0" fill="#c4c4cc" />
<rect x="399.2" y="1044.7" width="7.0" height="5.6" fill="#c46a08" />
<rect x="413.5" y="1035.0" width="12.0" height="25.0" fill="none" stroke="#fdf3ea" stroke-width="1.3"/>
<rect x="416.0" y="1037.5" width="7.0" height="20.0" fill="#f7bf72" />
<rect x="416.0" y="1041.5" width="7.0" height="12.0" fill="#c4c4cc" />
<rect x="416.0" y="1044.7" width="7.0" height="5.6" fill="#c46a08" />
<rect x="338.6" y="1039.0" width="6.0" height="17.0" fill="#f7bf72" />
<rect x="338.6" y="1042.4" width="6.0" height="10.2" fill="#c4c4cc" />
<rect x="338.6" y="1045.1" width="6.0" height="4.8" fill="#232323" />
<text transform="translate(281.0,1088.0) rotate(-90)" font-size="9.6" fill="#f9daf9" font-weight="bold" font-family="Liberation Sans" textLength="19.0" lengthAdjust="spacingAndGlyphs" stroke="#f9daf9" stroke-width="0.9">R5</text>
<text transform="translate(296.0,1088.0) rotate(-90)" font-size="9.6" fill="#f9daf9" font-weight="bold" font-family="Liberation Sans" textLength="19.0" lengthAdjust="spacingAndGlyphs" stroke="#f9daf9" stroke-width="0.9">C11</text>
<text transform="translate(311.0,1088.0) rotate(-90)" font-size="9.6" fill="#f9daf9" font-weight="bold" font-family="Liberation Sans" textLength="19.0" lengthAdjust="spacingAndGlyphs" stroke="#f9daf9" stroke-width="0.9">R12</text>
<text transform="translate(326.0,1088.0) rotate(-90)" font-size="9.6" fill="#f9daf9" font-weight="bold" font-family="Liberation Sans" textLength="19.0" lengthAdjust="spacingAndGlyphs" stroke="#f9daf9" stroke-width="0.9">R12</text>
<text transform="translate(341.0,1088.0) rotate(-90)" font-size="9.6" fill="#f9daf9" font-weight="bold" font-family="Liberation Sans" textLength="19.0" lengthAdjust="spacingAndGlyphs" stroke="#f9daf9" stroke-width="0.9">C8</text>
<text transform="translate(356.0,1088.0) rotate(-90)" font-size="9.6" fill="#f9daf9" font-weight="bold" font-family="Liberation Sans" textLength="19.0" lengthAdjust="spacingAndGlyphs" stroke="#f9daf9" stroke-width="0.9">C45</text>
<text transform="translate(377.0,1088.0) rotate(-90)" font-size="9.6" fill="#f9daf9" font-weight="bold" font-family="Liberation Sans" textLength="19.0" lengthAdjust="spacingAndGlyphs" stroke="#f9daf9" stroke-width="0.9">R21</text>
<text transform="translate(402.0,1088.0) rotate(-90)" font-size="9.6" fill="#f9daf9" font-weight="bold" font-family="Liberation Sans" textLength="19.0" lengthAdjust="spacingAndGlyphs" stroke="#f9daf9" stroke-width="0.9">C45</text>
<text transform="translate(419.0,1088.0) rotate(-90)" font-size="9.6" fill="#f9daf9" font-weight="bold" font-family="Liberation Sans" textLength="19.0" lengthAdjust="spacingAndGlyphs" stroke="#f9daf9" stroke-width="0.9">R5</text>
<rect x="512.6" y="1094.0" width="170.0" height="38.8" fill="#555555" />
<path d="M511.5 1094.0 L511.5 1133.0" stroke="#fdf3ea" stroke-width="1.4" fill="none"/>
<text x="480.0" y="1106.0" font-size="9.6" fill="#f9daf9" font-weight="bold" font-family="Liberation Sans" textLength="16.3" lengthAdjust="spacingAndGlyphs" stroke="#f9daf9" stroke-width="0.9" text-anchor="start">CN3</text>
<rect x="464.4" y="993.0" width="23.1" height="12.0" fill="none" stroke="#fdf3ea" stroke-width="1.3"/>
<rect x="466.9" y="995.5" width="18.1" height="7.0" fill="#f7bf72" />
<rect x="470.5" y="995.5" width="10.9" height="7.0" fill="#c4c4cc" />
<rect x="473.4" y="995.5" width="5.1" height="7.0" fill="#c46a08" />
<text x="466.0" y="990.0" font-size="7.8" fill="#f9daf9" font-weight="bold" font-family="Liberation Sans" textLength="17.7" lengthAdjust="spacingAndGlyphs" stroke="#f9daf9" stroke-width="0.9" text-anchor="start">R247</text>
<circle cx="504.5" cy="999.0" r="5" fill="#f7bf72"/>
<circle cx="498.3" cy="1011.1" r="5" fill="#f7bf72"/>
<circle cx="514.9" cy="1014.2" r="5" fill="#f7bf72"/>
<circle cx="501.4" cy="1031.0" r="5" fill="#f7bf72"/>
<circle cx="523.0" cy="1027.5" r="5" fill="#f7bf72"/>
<text x="474.0" y="1015.0" font-size="7.8" fill="#f9daf9" font-weight="bold" font-family="Liberation Sans" textLength="17.7" lengthAdjust="spacingAndGlyphs" stroke="#f9daf9" stroke-width="0.9" text-anchor="start">TP47</text>
<text x="476.0" y="1034.0" font-size="7.8" fill="#f9daf9" font-weight="bold" font-family="Liberation Sans" textLength="17.7" lengthAdjust="spacingAndGlyphs" stroke="#f9daf9" stroke-width="0.9" text-anchor="start">TP44</text>
<text transform="translate(508.0,985.0) rotate(-90)" font-size="9.6" fill="#f9daf9" font-weight="bold" font-family="Liberation Sans" textLength="19.0" lengthAdjust="spacingAndGlyphs" stroke="#f9daf9" stroke-width="0.9">R40</text>
<text transform="translate(525.0,1005.0) rotate(-90)" font-size="9.6" fill="#f9daf9" font-weight="bold" font-family="Liberation Sans" textLength="19.0" lengthAdjust="spacingAndGlyphs" stroke="#f9daf9" stroke-width="0.9">TP46</text>
<text transform="translate(530.0,1058.0) rotate(-90)" font-size="9.6" fill="#f9daf9" font-weight="bold" font-family="Liberation Sans" textLength="19.0" lengthAdjust="spacingAndGlyphs" stroke="#f9daf9" stroke-width="0.9">TP45</text>
<rect x="500.8" y="1042.0" width="6.5" height="16.6" fill="#f7bf72" />
<rect x="500.8" y="1045.3" width="6.5" height="10.0" fill="#c4c4cc" />
<rect x="500.8" y="1048.0" width="6.5" height="4.6" fill="#232323" />
<path d="M510.0 1038.5 L498.0 1038.5 L498.0 1062.0 L510.0 1062.0" stroke="#fdf3ea" stroke-width="1.3" fill="none"/>
<text transform="translate(494.0,1059.0) rotate(-90)" font-size="9.6" fill="#f9daf9" font-weight="bold" font-family="Liberation Sans" textLength="19.0" lengthAdjust="spacingAndGlyphs" stroke="#f9daf9" stroke-width="0.9">R29</text>
<rect x="533.4" y="948.2" width="12.0" height="22.3" fill="none" stroke="#fdf3ea" stroke-width="1.3"/>
<rect x="535.9" y="950.7" width="7.0" height="17.3" fill="#f7bf72" />
<rect x="535.9" y="954.2" width="7.0" height="10.4" fill="#c4c4cc" />
<rect x="535.9" y="956.9" width="7.0" height="4.8" fill="#c46a08" />
<text transform="translate(528.0,968.0) rotate(-90)" font-size="9.6" fill="#f9daf9" font-weight="bold" font-family="Liberation Sans" textLength="19.0" lengthAdjust="spacingAndGlyphs" stroke="#f9daf9" stroke-width="0.9">C45</text>
<rect x="550.6" y="965.0" width="18.1" height="6.5" fill="#f7bf72" />
<rect x="554.2" y="965.0" width="10.9" height="6.5" fill="#c4c4cc" />
<rect x="557.1" y="965.0" width="5.1" height="6.5" fill="#232323" />
<rect x="575.6" y="965.0" width="18.2" height="6.5" fill="#f7bf72" />
<rect x="579.2" y="965.0" width="10.9" height="6.5" fill="#c4c4cc" />
<rect x="582.2" y="965.0" width="5.1" height="6.5" fill="#232323" />
<rect x="548.0" y="960.0" width="48.5" height="16.0" fill="none" stroke="#fdf3ea" stroke-width="1.3"/>
<path d="M572.0 960.0 L572.0 976.0" stroke="#fdf3ea" stroke-width="1.3" fill="none"/>
<circle cx="558.0" cy="954.2" r="5" fill="#f7bf72"/>
<circle cx="589.4" cy="954.6" r="5" fill="#f7bf72"/>
<text x="565.0" y="952.0" font-size="7.8" fill="#f9daf9" font-weight="bold" font-family="Liberation Sans" textLength="13.3" lengthAdjust="spacingAndGlyphs" stroke="#f9daf9" stroke-width="0.9" text-anchor="start">TP1</text>
<text x="600.0" y="959.0" font-size="7.8" fill="#f9daf9" font-weight="bold" font-family="Liberation Sans" textLength="13.3" lengthAdjust="spacingAndGlyphs" stroke="#f9daf9" stroke-width="0.9" text-anchor="start">TP2</text>
<text x="600.0" y="972.0" font-size="8.4" fill="#f9daf9" font-weight="bold" font-family="Liberation Sans" textLength="14.3" lengthAdjust="spacingAndGlyphs" stroke="#f9daf9" stroke-width="0.9" text-anchor="start">R53</text>
<text x="551.0" y="984.0" font-size="8.4" fill="#f9daf9" font-weight="bold" font-family="Liberation Sans" textLength="9.5" lengthAdjust="spacingAndGlyphs" stroke="#f9daf9" stroke-width="0.9" text-anchor="start">A1</text>
<rect x="584.3" y="976.7" width="12.0" height="23.1" fill="none" stroke="#fdf3ea" stroke-width="1.3"/>
<rect x="586.8" y="979.2" width="7.0" height="18.1" fill="#f7bf72" />
<rect x="586.8" y="982.8" width="7.0" height="10.9" fill="#c4c4cc" />
<rect x="586.8" y="985.7" width="7.0" height="5.1" fill="#c46a08" />
<circle cx="533.9" cy="993" r="8.3" fill="#f7bf72"/><circle cx="533.9" cy="993" r="3.3" fill="#333"/>
<circle cx="565.6" cy="993" r="8.3" fill="#f7bf72"/><circle cx="565.6" cy="993" r="3.3" fill="#333"/>
<path d="M533.9 993.0 L540.0 1021.0" stroke="#cccccc" stroke-width="3" fill="none"/>
<path d="M565.6 993.0 L560.0 1021.0" stroke="#cccccc" stroke-width="3" fill="none"/>
<rect x="534.2" y="1021.5" width="31.9" height="71.5" fill="url(#cyl)" />
<rect x="538.0" y="1093.0" width="23.0" height="18.0" fill="url(#cyl)" />
<path d="M532.5 1021.0 L532.5 1093.0" stroke="#fdf3ea" stroke-width="1.2" fill="none"/>
<rect x="596.2" y="1004.2" width="12.0" height="22.6" fill="none" stroke="#fdf3ea" stroke-width="1.3"/>
<rect x="598.7" y="1006.7" width="7.0" height="17.6" fill="#f7bf72" />
<rect x="598.7" y="1010.2" width="7.0" height="10.6" fill="#c4c4cc" />
<rect x="598.7" y="1013.0" width="7.0" height="4.9" fill="#232323" />
<rect x="609.7" y="1004.2" width="12.0" height="22.6" fill="none" stroke="#fdf3ea" stroke-width="1.3"/>
<rect x="612.2" y="1006.7" width="7.0" height="17.6" fill="#f7bf72" />
<rect x="612.2" y="1010.2" width="7.0" height="10.6" fill="#c4c4cc" />
<rect x="612.2" y="1013.0" width="7.0" height="4.9" fill="#232323" />
<rect x="623.2" y="1004.2" width="12.0" height="22.6" fill="none" stroke="#fdf3ea" stroke-width="1.3"/>
<rect x="625.7" y="1006.7" width="7.0" height="17.6" fill="#f7bf72" />
<rect x="625.7" y="1010.2" width="7.0" height="10.6" fill="#c4c4cc" />
<rect x="625.7" y="1013.0" width="7.0" height="4.9" fill="#232323" />
<rect x="594.1" y="1045.7" width="12.0" height="23.2" fill="none" stroke="#fdf3ea" stroke-width="1.3"/>
<rect x="596.6" y="1048.2" width="7.0" height="18.2" fill="#f7bf72" />
<rect x="596.6" y="1051.8" width="7.0" height="10.9" fill="#c4c4cc" />
<rect x="596.6" y="1054.8" width="7.0" height="5.1" fill="#232323" />
<rect x="608.8" y="1045.7" width="12.0" height="23.2" fill="none" stroke="#fdf3ea" stroke-width="1.3"/>
<rect x="611.3" y="1048.2" width="7.0" height="18.2" fill="#f7bf72" />
<rect x="611.3" y="1051.8" width="7.0" height="10.9" fill="#c4c4cc" />
<rect x="611.3" y="1054.8" width="7.0" height="5.1" fill="#232323" />
<rect x="623.2" y="1045.7" width="12.0" height="23.2" fill="none" stroke="#fdf3ea" stroke-width="1.3"/>
<rect x="625.7" y="1048.2" width="7.0" height="18.2" fill="#f7bf72" />
<rect x="625.7" y="1051.8" width="7.0" height="10.9" fill="#c4c4cc" />
<rect x="625.7" y="1054.8" width="7.0" height="5.1" fill="#232323" />
<rect x="637.2" y="1045.7" width="12.0" height="23.2" fill="none" stroke="#fdf3ea" stroke-width="1.3"/>
<rect x="639.7" y="1048.2" width="7.0" height="18.2" fill="#f7bf72" />
<rect x="639.7" y="1051.8" width="7.0" height="10.9" fill="#c4c4cc" />
<rect x="639.7" y="1054.8" width="7.0" height="5.1" fill="#232323" />
<text transform="translate(594.0,1024.0) rotate(-90)" font-size="9.6" fill="#f9daf9" font-weight="bold" font-family="Liberation Sans" textLength="19.0" lengthAdjust="spacingAndGlyphs" stroke="#f9daf9" stroke-width="0.9">R103</text>
<text transform="translate(588.0,1068.0) rotate(-90)" font-size="9.6" fill="#f9daf9" font-weight="bold" font-family="Liberation Sans" textLength="19.0" lengthAdjust="spacingAndGlyphs" stroke="#f9daf9" stroke-width="0.9">R24</text>
<text transform="translate(655.0,1062.0) rotate(-90)" font-size="9.6" fill="#f9daf9" font-weight="bold" font-family="Liberation Sans" textLength="19.0" lengthAdjust="spacingAndGlyphs" stroke="#f9daf9" stroke-width="0.9">R14</text>
<text transform="translate(578.0,1028.0) rotate(-90)" font-size="9.6" fill="#f9daf9" font-weight="bold" font-family="Liberation Sans" textLength="19.0" lengthAdjust="spacingAndGlyphs" stroke="#f9daf9" stroke-width="0.9">C38</text>
<text x="605.0" y="1046.0" font-size="8.4" fill="#f9daf9" font-weight="bold" font-family="Liberation Sans" textLength="19.0" lengthAdjust="spacingAndGlyphs" stroke="#f9daf9" stroke-width="0.9" text-anchor="start">R185</text>
<text x="622.0" y="1081.0" font-size="8.4" fill="#f9daf9" font-weight="bold" font-family="Liberation Sans" textLength="14.3" lengthAdjust="spacingAndGlyphs" stroke="#f9daf9" stroke-width="0.9" text-anchor="start">C42</text>
<text transform="translate(605.0,997.0) rotate(-90)" font-size="9.6" fill="#f9daf9" font-weight="bold" font-family="Liberation Sans" textLength="19.0" lengthAdjust="spacingAndGlyphs" stroke="#f9daf9" stroke-width="0.9">C16</text>
<text transform="translate(620.0,997.0) rotate(-90)" font-size="9.6" fill="#f9daf9" font-weight="bold" font-family="Liberation Sans" textLength="19.0" lengthAdjust="spacingAndGlyphs" stroke="#f9daf9" stroke-width="0.9">C16</text>
<text transform="translate(635.0,997.0) rotate(-90)" font-size="9.6" fill="#f9daf9" font-weight="bold" font-family="Liberation Sans" textLength="19.0" lengthAdjust="spacingAndGlyphs" stroke="#f9daf9" stroke-width="0.9">C16</text>
<rect x="666.1" y="1013.5" width="12.0" height="22.6" fill="none" stroke="#fdf3ea" stroke-width="1.3"/>
<rect x="668.6" y="1016.0" width="7.0" height="17.6" fill="#f7bf72" />
<rect x="668.6" y="1019.5" width="7.0" height="10.6" fill="#c4c4cc" />
<rect x="668.6" y="1022.3" width="7.0" height="4.9" fill="#232323" />
<circle cx="672.1" cy="1042.4" r="5" fill="#f7bf72"/>
<rect x="668.6" y="1051.8" width="7.0" height="18.1" fill="#f7bf72" />
<rect x="668.6" y="1055.4" width="7.0" height="10.9" fill="#c4c4cc" />
<rect x="668.6" y="1058.3" width="7.0" height="5.1" fill="#c46a08" />
<path d="M665.0 1073.0 L665.0 1049.0 L679.0 1049.0 L679.0 1073.0" stroke="#fdf3ea" stroke-width="1.3" fill="none"/>
<text transform="translate(686.0,1072.0) rotate(-90)" font-size="9.6" fill="#f9daf9" font-weight="bold" font-family="Liberation Sans" textLength="19.0" lengthAdjust="spacingAndGlyphs" stroke="#f9daf9" stroke-width="0.9">C116</text>
<text transform="translate(676.0,1008.0) rotate(-90)" font-size="9.6" fill="#f9daf9" font-weight="bold" font-family="Liberation Sans" textLength="19.0" lengthAdjust="spacingAndGlyphs" stroke="#f9daf9" stroke-width="0.9">R72</text>
<rect x="687.1" y="965.2" width="10.5" height="20.4" fill="#c4c4cc" />
<rect x="687.1" y="968.0" width="10.5" height="14.5" fill="#c46a08" />
<rect x="685.0" y="963.0" width="14.5" height="25.0" fill="none" stroke="#fdf3ea" stroke-width="1.3"/>
<text transform="translate(708.0,980.0) rotate(-90)" font-size="9.6" fill="#f9daf9" font-weight="bold" font-family="Liberation Sans" textLength="19.0" lengthAdjust="spacingAndGlyphs" stroke="#f9daf9" stroke-width="0.9">C5</text>
<rect x="725.0" y="995.5" width="12.0" height="22.5" fill="none" stroke="#fdf3ea" stroke-width="1.3"/>
<rect x="727.5" y="998.0" width="7.0" height="17.5" fill="#f7bf72" />
<rect x="727.5" y="1001.5" width="7.0" height="10.5" fill="#c4c4cc" />
<rect x="727.5" y="1004.3" width="7.0" height="4.9" fill="#232323" />
<text transform="translate(736.0,1040.0) rotate(-90)" font-size="9.6" fill="#f9daf9" font-weight="bold" font-family="Liberation Sans" textLength="19.0" lengthAdjust="spacingAndGlyphs" stroke="#f9daf9" stroke-width="0.9">R74</text>
<rect x="750.9" y="990.3" width="7.0" height="17.6" fill="#f7bf72" />
<rect x="750.9" y="993.8" width="7.0" height="10.6" fill="#c4c4cc" />
<rect x="750.9" y="996.6" width="7.0" height="4.9" fill="#232323" />
<path d="M749.0 971.0 L759.0 971.0 L759.0 1012.0 L749.0 1012.0" stroke="#fdf3ea" stroke-width="1.3" fill="none"/>
<text transform="translate(760.0,970.0) rotate(-90)" font-size="9.6" fill="#f9daf9" font-weight="bold" font-family="Liberation Sans" textLength="19.0" lengthAdjust="spacingAndGlyphs" stroke="#f9daf9" stroke-width="0.9">R12</text>
</svg>
<div class="b" style="left:1144px;top:163px;width:705px;height:1114px;background:#f0f0f0"></div>
<div class="b" style="left:1146px;top:166px;width:701px;height:1110px;border-top:1.5px solid #a0a0a0;border-right:1.5px solid #a0a0a0;box-sizing:border-box"></div>
<div class="b" style="left:1146px;top:166px;width:699px;height:42px;border:1.5px solid #a4a4a4;border-left:none;box-sizing:border-box"></div>
<div class="t" style="left:1150.0px;top:175.0px;font-size:21px;color:#000;letter-spacing:0.06px;">Export 3D Option</div>
<svg class="b" style="left:1815px;top:179px" width="19" height="19"><path d="M3 3 L16 16 M16 3 L3 16" stroke="#555" stroke-width="1.5"/></svg>
<div class="b" style="left:1154px;top:222px;width:683px;height:61px;border:1.5px solid #a0a0a0;box-shadow:inset 1px 1px 0 #fdfdfd, 1px 1px 0 #fdfdfd;box-sizing:border-box"></div>
<div class="b" style="left:1164px;top:220px;width:53px;height:5px;background:#f0f0f0"></div>
<div class="t" style="left:1168.0px;top:212.6px;font-size:20px;color:#000;letter-spacing:0.16px;">Type</div>
<svg class="b" style="left:1176px;top:245px" width="22" height="22"><circle cx="11" cy="11" r="8.6" fill="#fff"/><path d="M4.9 17.1 A8.6 8.6 0 0 1 17.1 4.9" stroke="#858585" stroke-width="2.2" fill="none"/><path d="M17.1 4.9 A8.6 8.6 0 0 1 4.9 17.1" stroke="#fafafa" stroke-width="2" fill="none"/><circle cx="11" cy="11" r="3.6" fill="#000"/></svg>
<div class="t" style="left:1207.0px;top:246.9px;font-size:20px;color:#000;letter-spacing:-2.26px;">STEP</div>
<svg class="b" style="left:1459px;top:245px" width="22" height="22"><circle cx="11" cy="11" r="8.6" fill="#fff"/><path d="M4.9 17.1 A8.6 8.6 0 0 1 17.1 4.9" stroke="#858585" stroke-width="2.2" fill="none"/><path d="M17.1 4.9 A8.6 8.6 0 0 1 4.9 17.1" stroke="#fafafa" stroke-width="2" fill="none"/></svg>
<div class="t" style="left:1489.4px;top:246.9px;font-size:20px;color:#000;letter-spacing:-1.89px;">STL</div>
<svg class="b" style="left:1732.4px;top:245px" width="22" height="22"><circle cx="11" cy="11" r="8.6" fill="#fff"/><path d="M4.9 17.1 A8.6 8.6 0 0 1 17.1 4.9" stroke="#858585" stroke-width="2.2" fill="none"/><path d="M17.1 4.9 A8.6 8.6 0 0 1 4.9 17.1" stroke="#fafafa" stroke-width="2" fill="none"/></svg>
<div class="t" style="left:1763.0px;top:246.9px;font-size:20px;color:#000;letter-spacing:-0.54px;">IDF</div>
<div class="b" style="left:1153px;top:291.5px;width:685px;height:40.5px;background:#fcfcfc"></div>
<div class="b" style="left:1161px;top:296px;width:78px;height:36px;background:#f2f2f2"></div>
<div class="b" style="left:1239.5px;top:296px;width:2.0px;height:36px;background:#5a5a5a"></div>
<div class="t" style="left:1165.6px;top:301.5px;font-size:21px;color:#000;letter-spacing:0.42px;">Option</div>
<div class="t" style="left:1245.0px;top:301.5px;font-size:21px;color:#a7a7bd;letter-spacing:-0.51px;">Board</div>
<div class="b" style="left:1308.3px;top:299px;width:1.5px;height:32px;background:#9a9a9a"></div>
<div class="t" style="left:1314.5px;top:301.5px;font-size:21px;color:#a7a7bd;letter-spacing:-0.41px;">Layer</div>
<div class="b" style="left:1373.6px;top:299px;width:1.5px;height:32px;background:#9a9a9a"></div>
<svg class="b" style="left:1768px;top:300px" width="60" height="24"><polygon points="13.5,4 13.5,19.5 5,11.75" fill="none" stroke="#666" stroke-width="1.6"/><polygon points="42,4 42,19.5 50.5,11.75" fill="none" stroke="#666" stroke-width="1.6"/></svg>
<div class="b" style="left:1153px;top:337px;width:655px;height:875px;overflow:hidden">
<div class="b" style="left:1.0px;top:12.5px;width:622.5px;height:80.0px;border:1.5px solid #a0a0a0;box-shadow:inset 1px 1px 0 #fdfdfd, 1px 1px 0 #fdfdfd;box-sizing:border-box"></div>
<div class="b" style="left:17.0px;top:10.5px;width:514px;height:5.0px;background:#f0f0f0"></div>
<svg class="b" style="left:17.5px;top:2.4px" width="22" height="22"><circle cx="11" cy="11" r="8.6" fill="#fff"/><path d="M4.9 17.1 A8.6 8.6 0 0 1 17.1 4.9" stroke="#858585" stroke-width="2.2" fill="none"/><path d="M17.1 4.9 A8.6 8.6 0 0 1 4.9 17.1" stroke="#fafafa" stroke-width="2" fill="none"/></svg>
<div class="t" style="left:49.0px;top:4.7px;font-size:20px;color:#000;letter-spacing:-0.20px;">Component (Export selected components by each file)</div>
<div class="b" style="left:17.0px;top:40.0px;width:592px;height:41px;background:#f0f0f0;border-top:1.5px solid #fdfdfd;border-left:1.5px solid #fdfdfd;box-shadow:inset -2.5px -2.5px 0 #696969, inset -3.5px -3.5px 0 #a8a8a8, inset 1px 1px 0 #e3e3e3;box-sizing:border-box"></div>
<div class="t" style="left:233.0px;top:48.9px;font-size:20px;color:#a3a3a3;letter-spacing:-0.53px;">Select Component</div>
<div class="b" style="left:1.0px;top:127.0px;width:622.5px;height:60.5px;border:1.5px solid #a0a0a0;box-shadow:inset 1px 1px 0 #fdfdfd, 1px 1px 0 #fdfdfd;box-sizing:border-box"></div>
<div class="b" style="left:17.0px;top:125.0px;width:139px;height:5px;background:#f0f0f0"></div>
<svg class="b" style="left:18.0px;top:115.2px" width="22" height="22"><circle cx="11" cy="11" r="8.6" fill="#fff"/><path d="M4.9 17.1 A8.6 8.6 0 0 1 17.1 4.9" stroke="#858585" stroke-width="2.2" fill="none"/><path d="M17.1 4.9 A8.6 8.6 0 0 1 4.9 17.1" stroke="#fafafa" stroke-width="2" fill="none"/></svg>
<div class="t" style="left:48.5px;top:117.1px;font-size:20px;color:#000;letter-spacing:-0.57px;">Metal Mask</div>
<svg class="b" style="left:39.3px;top:154.0px" width="22" height="22"><rect x="0" y="0" width="21" height="21" fill="#e9e9e9"/><rect x="3" y="3" width="16" height="16" fill="#f0f0f0"/><path d="M1 21 L1 1 L21 1" stroke="#808080" stroke-width="2" fill="none"/><path d="M3 19 L3 3 L19 3" stroke="#5f5f5f" stroke-width="1.6" fill="none"/><path d="M20.5 1 L20.5 20.5 L1 20.5" stroke="#fdfdfd" stroke-width="1" fill="none"/></svg>
<div class="t" style="left:70.7px;top:155.9px;font-size:20px;color:#a3a3a3;letter-spacing:-0.20px;">Top Layer</div>
<svg class="b" style="left:315.0px;top:154.0px" width="22" height="22"><rect x="0" y="0" width="21" height="21" fill="#e9e9e9"/><rect x="3" y="3" width="16" height="16" fill="#f0f0f0"/><path d="M1 21 L1 1 L21 1" stroke="#808080" stroke-width="2" fill="none"/><path d="M3 19 L3 3 L19 3" stroke="#5f5f5f" stroke-width="1.6" fill="none"/><path d="M20.5 1 L20.5 20.5 L1 20.5" stroke="#fdfdfd" stroke-width="1" fill="none"/></svg>
<div class="t" style="left:346.0px;top:155.9px;font-size:20px;color:#a3a3a3;letter-spacing:-0.20px;">Bottom Layer</div>
<div class="b" style="left:1.0px;top:226.0px;width:622.5px;height:147px;border:1.5px solid #a0a0a0;box-shadow:inset 1px 1px 0 #fdfdfd, 1px 1px 0 #fdfdfd;box-sizing:border-box"></div>
<div class="b" style="left:17.0px;top:224.0px;width:318px;height:5px;background:#f0f0f0"></div>
<svg class="b" style="left:18.0px;top:211.6px" width="22" height="22"><circle cx="11" cy="11" r="8.6" fill="#fff"/><path d="M4.9 17.1 A8.6 8.6 0 0 1 17.1 4.9" stroke="#858585" stroke-width="2.2" fill="none"/><path d="M17.1 4.9 A8.6 8.6 0 0 1 4.9 17.1" stroke="#fafafa" stroke-width="2" fill="none"/></svg>
<div class="t" style="left:48.0px;top:213.6px;font-size:20px;color:#000;letter-spacing:-0.13px;">Net (Export Selected Nets only)</div>
<div class="b" style="left:17.0px;top:252.0px;width:592px;height:40px;background:#f0f0f0;border-top:1.5px solid #fdfdfd;border-left:1.5px solid #fdfdfd;box-shadow:inset -2.5px -2.5px 0 #696969, inset -3.5px -3.5px 0 #a8a8a8, inset 1px 1px 0 #e3e3e3;box-sizing:border-box"></div>
<div class="t" style="left:266.0px;top:260.4px;font-size:20px;color:#a3a3a3;letter-spacing:-0.33px;">Select Net</div>
<svg class="b" style="left:39.3px;top:301.0px" width="22" height="22"><rect x="0" y="0" width="21" height="21" fill="#e9e9e9"/><rect x="3" y="3" width="16" height="16" fill="#f0f0f0"/><path d="M1 21 L1 1 L21 1" stroke="#808080" stroke-width="2" fill="none"/><path d="M3 19 L3 3 L19 3" stroke="#5f5f5f" stroke-width="1.6" fill="none"/><path d="M20.5 1 L20.5 20.5 L1 20.5" stroke="#fdfdfd" stroke-width="1" fill="none"/></svg>
<div class="t" style="left:70.5px;top:302.4px;font-size:20px;color:#a3a3a3;letter-spacing:-0.20px;">Footprint Pad</div>
<svg class="b" style="left:315.0px;top:301.0px" width="22" height="22"><rect x="0" y="0" width="21" height="21" fill="#e9e9e9"/><rect x="3" y="3" width="16" height="16" fill="#f0f0f0"/><path d="M1 21 L1 1 L21 1" stroke="#808080" stroke-width="2" fill="none"/><path d="M3 19 L3 3 L19 3" stroke="#5f5f5f" stroke-width="1.6" fill="none"/><path d="M20.5 1 L20.5 20.5 L1 20.5" stroke="#fdfdfd" stroke-width="1" fill="none"/></svg>
<div class="t" style="left:346.0px;top:302.4px;font-size:20px;color:#a3a3a3;letter-spacing:-0.26px;">Include Board Geometry</div>
<svg class="b" style="left:39.3px;top:337.6px" width="22" height="22"><rect x="0" y="0" width="21" height="21" fill="#e9e9e9"/><rect x="3" y="3" width="16" height="16" fill="#f0f0f0"/><path d="M1 21 L1 1 L21 1" stroke="#808080" stroke-width="2" fill="none"/><path d="M3 19 L3 3 L19 3" stroke="#5f5f5f" stroke-width="1.6" fill="none"/><path d="M20.5 1 L20.5 20.5 L1 20.5" stroke="#fdfdfd" stroke-width="1" fill="none"/></svg>
<div class="t" style="left:70.5px;top:338.3px;font-size:20px;color:#a3a3a3;letter-spacing:-0.09px;">Export as separate file per Net</div>
<div class="b" style="left:1.0px;top:408.5px;width:622.5px;height:554.5px;border:1.5px solid #a0a0a0;box-shadow:inset 1px 1px 0 #fdfdfd, 1px 1px 0 #fdfdfd;box-sizing:border-box"></div>
<div class="b" style="left:17.0px;top:406.5px;width:92px;height:5.0px;background:#f0f0f0"></div>
<svg class="b" style="left:18.0px;top:398.6px" width="22" height="22"><circle cx="11" cy="11" r="8.6" fill="#fff"/><path d="M4.9 17.1 A8.6 8.6 0 0 1 17.1 4.9" stroke="#858585" stroke-width="2.2" fill="none"/><path d="M17.1 4.9 A8.6 8.6 0 0 1 4.9 17.1" stroke="#fafafa" stroke-width="2" fill="none"/><circle cx="11" cy="11" r="3.6" fill="#000"/></svg>
<div class="t" style="left:48.0px;top:399.9px;font-size:20px;color:#000;letter-spacing:-0.47px;">Board</div>
<div class="b" style="left:17.0px;top:443.5px;width:590px;height:60.0px;border:1.5px solid #a0a0a0;box-shadow:inset 1px 1px 0 #fdfdfd, 1px 1px 0 #fdfdfd;box-sizing:border-box"></div>
<div class="b" style="left:28.0px;top:441.5px;width:81px;height:5.0px;background:#f0f0f0"></div>
<div class="t" style="left:32.0px;top:433.6px;font-size:20px;color:#000;letter-spacing:-0.83px;">Package</div>
<svg class="b" style="left:39.3px;top:466.5px" width="22" height="22"><rect x="0" y="0" width="21" height="21" fill="#e9e9e9"/><rect x="3" y="3" width="16" height="16" fill="#fff"/><path d="M1 21 L1 1 L21 1" stroke="#808080" stroke-width="2" fill="none"/><path d="M3 19 L3 3 L19 3" stroke="#5f5f5f" stroke-width="1.6" fill="none"/><path d="M20.5 1 L20.5 20.5 L1 20.5" stroke="#fdfdfd" stroke-width="1" fill="none"/><path d="M5 11 L8.6 15.8 L16.4 6.2" stroke="#000" stroke-width="3.2" fill="none" stroke-linejoin="miter"/></svg>
<div class="t" style="left:70.5px;top:467.4px;font-size:20px;color:#000;letter-spacing:-0.77px;">Body</div>
<svg class="b" style="left:315.0px;top:466.5px" width="22" height="22"><rect x="0" y="0" width="21" height="21" fill="#e9e9e9"/><rect x="3" y="3" width="16" height="16" fill="#fff"/><path d="M1 21 L1 1 L21 1" stroke="#808080" stroke-width="2" fill="none"/><path d="M3 19 L3 3 L19 3" stroke="#5f5f5f" stroke-width="1.6" fill="none"/><path d="M20.5 1 L20.5 20.5 L1 20.5" stroke="#fdfdfd" stroke-width="1" fill="none"/><path d="M5 11 L8.6 15.8 L16.4 6.2" stroke="#000" stroke-width="3.2" fill="none" stroke-linejoin="miter"/></svg>
<div class="t" style="left:346.0px;top:467.7px;font-size:20px;color:#000;letter-spacing:-0.47px;">Lead of Pin</div>
<svg class="b" style="left:39.3px;top:519.3px" width="22" height="22"><rect x="0" y="0" width="21" height="21" fill="#e9e9e9"/><rect x="3" y="3" width="16" height="16" fill="#fff"/><path d="M1 21 L1 1 L21 1" stroke="#808080" stroke-width="2" fill="none"/><path d="M3 19 L3 3 L19 3" stroke="#5f5f5f" stroke-width="1.6" fill="none"/><path d="M20.5 1 L20.5 20.5 L1 20.5" stroke="#fdfdfd" stroke-width="1" fill="none"/></svg>
<div class="t" style="left:70.5px;top:520.4px;font-size:20px;color:#000;letter-spacing:0.12px;">Footprint</div>
<svg class="b" style="left:315.0px;top:519.3px" width="22" height="22"><rect x="0" y="0" width="21" height="21" fill="#e9e9e9"/><rect x="3" y="3" width="16" height="16" fill="#fff"/><path d="M1 21 L1 1 L21 1" stroke="#808080" stroke-width="2" fill="none"/><path d="M3 19 L3 3 L19 3" stroke="#5f5f5f" stroke-width="1.6" fill="none"/><path d="M20.5 1 L20.5 20.5 L1 20.5" stroke="#fdfdfd" stroke-width="1" fill="none"/></svg>
<div class="t" style="left:346.0px;top:520.4px;font-size:20px;color:#000;letter-spacing:-0.39px;">Board Figure</div>
<svg class="b" style="left:39.3px;top:555.8px" width="22" height="22"><rect x="0" y="0" width="21" height="21" fill="#e9e9e9"/><rect x="3" y="3" width="16" height="16" fill="#f0f0f0"/><path d="M1 21 L1 1 L21 1" stroke="#808080" stroke-width="2" fill="none"/><path d="M3 19 L3 3 L19 3" stroke="#5f5f5f" stroke-width="1.6" fill="none"/><path d="M20.5 1 L20.5 20.5 L1 20.5" stroke="#fdfdfd" stroke-width="1" fill="none"/></svg>
<div class="t" style="left:70.5px;top:556.4px;font-size:20px;color:#a3a3a3;letter-spacing:-0.57px;">Solder Resist</div>
<svg class="b" style="left:315.0px;top:555.8px" width="22" height="22"><rect x="0" y="0" width="21" height="21" fill="#e9e9e9"/><rect x="3" y="3" width="16" height="16" fill="#f0f0f0"/><path d="M1 21 L1 1 L21 1" stroke="#808080" stroke-width="2" fill="none"/><path d="M3 19 L3 3 L19 3" stroke="#5f5f5f" stroke-width="1.6" fill="none"/><path d="M20.5 1 L20.5 20.5 L1 20.5" stroke="#fdfdfd" stroke-width="1" fill="none"/></svg>
<div class="t" style="left:346.0px;top:556.4px;font-size:20px;color:#a3a3a3;letter-spacing:-0.73px;">Silkscreen</div>
<div class="b" style="left:17.0px;top:607.0px;width:590px;height:59.5px;border:1.5px solid #a0a0a0;box-shadow:inset 1px 1px 0 #fdfdfd, 1px 1px 0 #fdfdfd;box-sizing:border-box"></div>
<div class="b" style="left:28.0px;top:605.0px;width:107px;height:5px;background:#f0f0f0"></div>
<svg class="b" style="left:39.3px;top:594.0px" width="22" height="22"><rect x="0" y="0" width="21" height="21" fill="#e9e9e9"/><rect x="3" y="3" width="16" height="16" fill="#fff"/><path d="M1 21 L1 1 L21 1" stroke="#808080" stroke-width="2" fill="none"/><path d="M3 19 L3 3 L19 3" stroke="#5f5f5f" stroke-width="1.6" fill="none"/><path d="M20.5 1 L20.5 20.5 L1 20.5" stroke="#fdfdfd" stroke-width="1" fill="none"/></svg>
<div class="t" style="left:70.5px;top:594.4px;font-size:20px;color:#000;letter-spacing:-0.37px;">Route</div>
<svg class="b" style="left:61.0px;top:626.7px" width="22" height="22"><rect x="0" y="0" width="21" height="21" fill="#e9e9e9"/><rect x="3" y="3" width="16" height="16" fill="#f0f0f0"/><path d="M1 21 L1 1 L21 1" stroke="#808080" stroke-width="2" fill="none"/><path d="M3 19 L3 3 L19 3" stroke="#5f5f5f" stroke-width="1.6" fill="none"/><path d="M20.5 1 L20.5 20.5 L1 20.5" stroke="#fdfdfd" stroke-width="1" fill="none"/></svg>
<div class="t" style="left:92.0px;top:627.2px;font-size:20px;color:#a3a3a3;letter-spacing:-0.33px;">Except Copper</div>
<svg class="b" style="left:39.3px;top:683.0px" width="22" height="22"><rect x="0" y="0" width="21" height="21" fill="#e9e9e9"/><rect x="3" y="3" width="16" height="16" fill="#fff"/><path d="M1 21 L1 1 L21 1" stroke="#808080" stroke-width="2" fill="none"/><path d="M3 19 L3 3 L19 3" stroke="#5f5f5f" stroke-width="1.6" fill="none"/><path d="M20.5 1 L20.5 20.5 L1 20.5" stroke="#fdfdfd" stroke-width="1" fill="none"/></svg>
<div class="t" style="left:70.0px;top:684.5px;font-size:20px;color:#000;letter-spacing:-0.35px;">Include Drill Layer</div>
<div class="b" style="left:17.0px;top:730.0px;width:590px;height:113.5px;border:1.5px solid #a0a0a0;box-shadow:inset 1px 1px 0 #fdfdfd, 1px 1px 0 #fdfdfd;box-sizing:border-box"></div>
<div class="b" style="left:28.0px;top:728.0px;width:58px;height:5px;background:#f0f0f0"></div>
<div class="t" style="left:32.0px;top:720.1px;font-size:20px;color:#000;letter-spacing:-0.31px;">Layer</div>
<div class="t" style="left:37.5px;top:754.4px;font-size:20px;color:#000;letter-spacing:-0.12px;">Start Layer</div>
<div class="b" style="left:162.0px;top:748.0px;width:422px;height:34.5px;background:#fff;box-shadow:inset 2px 2px 0 #6a6a6a, inset -1px -1px 0 #e8e8e8;box-sizing:border-box"></div>
<div class="b" style="left:553.0px;top:751.0px;width:30px;height:30.5px;background:#f0f0f0;box-shadow:inset -2px -2px 0 #6a6a6a, inset 1px 1px 0 #fdfdfd;box-sizing:border-box"></div>
<svg class="b" style="left:560.0px;top:760.8px" width="16" height="10"><polygon points="1,1 15,1 8,9" fill="#000"/></svg>
<div class="t" style="left:169.0px;top:756.9px;font-size:20px;color:#000;letter-spacing:-0.20px;">Top Layer</div>
<div class="t" style="left:37.5px;top:799.9px;font-size:20px;color:#000;letter-spacing:-0.57px;">End Layer</div>
<div class="b" style="left:162.0px;top:793.0px;width:422px;height:34.5px;background:#fff;box-shadow:inset 2px 2px 0 #6a6a6a, inset -1px -1px 0 #e8e8e8;box-sizing:border-box"></div>
<div class="b" style="left:553.0px;top:796.0px;width:30px;height:30.5px;background:#f0f0f0;box-shadow:inset -2px -2px 0 #6a6a6a, inset 1px 1px 0 #fdfdfd;box-sizing:border-box"></div>
<svg class="b" style="left:560.0px;top:805.8px" width="16" height="10"><polygon points="1,1 15,1 8,9" fill="#000"/></svg>
<div class="t" style="left:169.0px;top:802.2px;font-size:20px;color:#000;letter-spacing:-0.36px;">Bottom Layer</div>
<div class="b" style="left:17.0px;top:872.0px;width:590px;height:91px;border:1.5px solid #a0a0a0;box-shadow:inset 1px 1px 0 #fdfdfd, 1px 1px 0 #fdfdfd;box-sizing:border-box"></div>
<div class="b" style="left:28.0px;top:870.0px;width:109px;height:5px;background:#f0f0f0"></div>
<svg class="b" style="left:39.3px;top:862.7px" width="22" height="22"><rect x="0" y="0" width="21" height="21" fill="#e9e9e9"/><rect x="3" y="3" width="16" height="16" fill="#fff"/><path d="M1 21 L1 1 L21 1" stroke="#808080" stroke-width="2" fill="none"/><path d="M3 19 L3 3 L19 3" stroke="#5f5f5f" stroke-width="1.6" fill="none"/><path d="M20.5 1 L20.5 20.5 L1 20.5" stroke="#fdfdfd" stroke-width="1" fill="none"/></svg>
<div class="t" style="left:70.5px;top:862.9px;font-size:20px;color:#000;letter-spacing:-0.43px;">Exception</div>
</div>
<div class="b" style="left:1808px;top:337px;width:30px;height:875px;background:#f0f0f0;border-left:1px solid #fdfdfd;box-sizing:border-box"></div>
<div class="b" style="left:1809.5px;top:369px;width:27.0px;height:80px;background:#cdcdcd"></div>
<svg class="b" style="left:1812px;top:345px" width="22" height="18"><path d="M4.5 12.5 L11 6 L17.5 12.5" stroke="#5a5a5a" stroke-width="3.2" fill="none"/></svg>
<svg class="b" style="left:1811.5px;top:1188px" width="22" height="18"><path d="M4.5 5.5 L11 12 L17.5 5.5" stroke="#5a5a5a" stroke-width="3.2" fill="none"/></svg>
<div class="b" style="left:1154px;top:1217.5px;width:686px;height:47.0px;background:#f0f0f0;border:1.5px solid #6a6a6a;box-shadow:inset 1.5px 1.5px 0 #fdfdfd, inset -2px -2.5px 0 #6a6a6a, inset -3px -3.5px 0 #a8a8a8;box-sizing:border-box"></div>
<div class="t" style="left:1466.7px;top:1229.9px;font-size:20px;color:#000;letter-spacing:0.13px;">Export</div>
<div class="b" style="left:1144px;top:171px;width:710px;height:1111px;border:5px solid #ff0000;box-sizing:border-box"></div>
</body></html>
